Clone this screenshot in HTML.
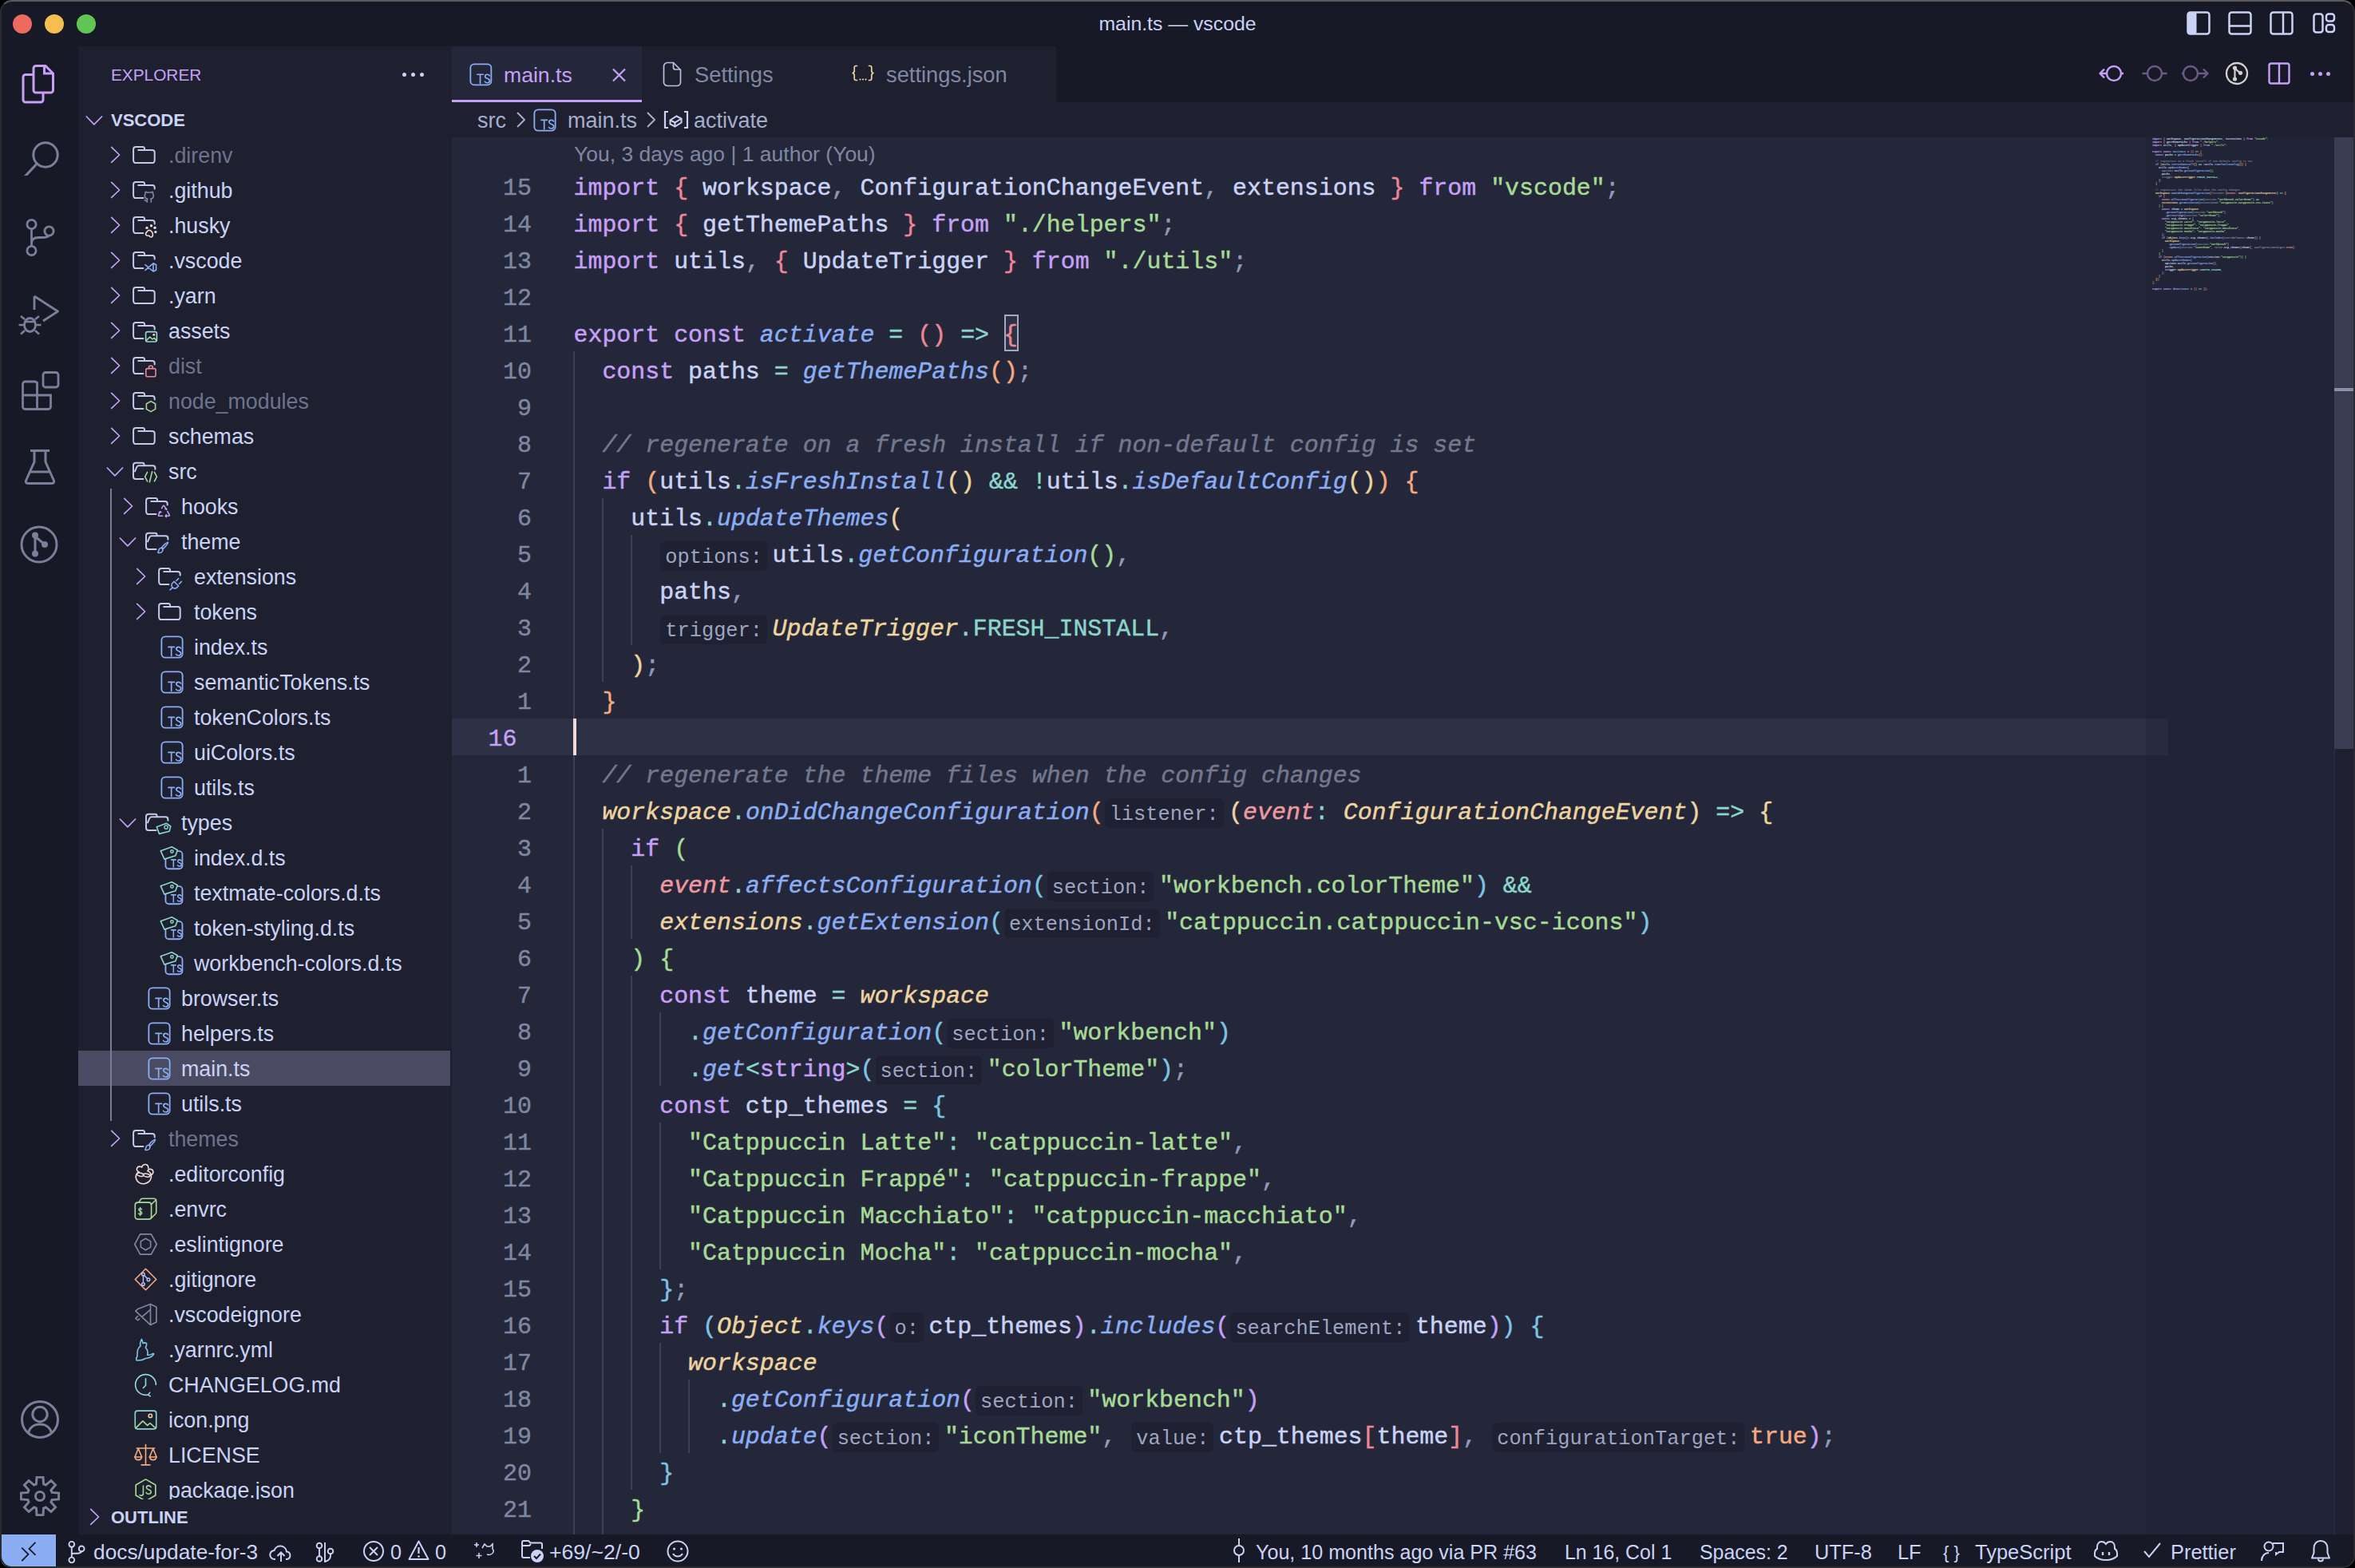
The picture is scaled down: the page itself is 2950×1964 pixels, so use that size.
<!DOCTYPE html><html><head><meta charset="utf-8"><title>main.ts — vscode</title><style>
html,body{margin:0;padding:0;background:#000;}
body{width:2950px;height:1964px;overflow:hidden;position:relative;}
#app{position:absolute;left:0;top:0;width:2950px;height:1964px;border-radius:15px;overflow:hidden;background:#181926;}
#frame{position:absolute;left:0;top:0;width:2946px;height:1960px;border:2px solid #2b2b2d;border-top-color:#5c5c5e;border-radius:15px;z-index:50;}
#app div, #app svg{position:absolute;}
.code{font-family:"Liberation Mono";font-size:29.92px;line-height:46px;height:46px;white-space:pre;color:#cad3f5;-webkit-text-stroke:0.45px currentColor;}
.hint{-webkit-text-stroke:0;display:inline-block;font-family:'Liberation Mono';font-size:25.37px;line-height:37px;height:37px;vertical-align:top;margin-top:4.5px;background:#1f2132;color:#9ea5c3;border-radius:6px;padding:0 5.9px;margin-left:1.2px;margin-right:6.6px;}
.hint span{position:relative;top:2px;}
</style></head><body><div id="app">

<div style="position:absolute;left:0px;top:0px;width:2950px;height:58px;background:#181926;"></div>
<div style="position:absolute;left:0px;top:58px;width:98px;height:1864px;background:#181926;"></div>
<div style="position:absolute;left:98px;top:58px;width:468px;height:1864px;background:#1e2030;"></div>
<div style="position:absolute;left:566px;top:58px;width:2384px;height:70px;background:#181926;"></div>
<div style="position:absolute;left:566px;top:128px;width:2384px;height:44px;background:#1e2030;"></div>
<div style="position:absolute;left:566px;top:172px;width:2384px;height:1750px;background:#24273a;"></div>
<div style="position:absolute;left:0px;top:1922px;width:2950px;height:42px;background:#181926;"></div>
<div style="left:16px;top:18px;width:24px;height:24px;border-radius:50%;background:#ed6a5e"></div>
<div style="left:56px;top:18px;width:24px;height:24px;border-radius:50%;background:#f4bf4f"></div>
<div style="left:96px;top:18px;width:24px;height:24px;border-radius:50%;background:#61c554"></div>
<div style="position:absolute;left:1475px;top:10px;height:40px;line-height:40px;font-family:'Liberation Sans';font-size:24.8px;font-weight:normal;color:#cad3f5;white-space:pre;transform:translateX(-50%);">main.ts — vscode</div>
<div style="position:absolute;left:566px;top:58px;width:238px;height:70px;background:#24273a;"></div>
<div style="position:absolute;left:566px;top:125px;width:238px;height:3px;background:#c6a0f6;"></div>
<div style="position:absolute;left:804px;top:58px;width:242px;height:70px;background:#1e2030;"></div>
<div style="position:absolute;left:1046px;top:58px;width:277px;height:70px;background:#1e2030;"></div>
<div style="position:absolute;left:631px;top:72px;height:44px;line-height:44px;font-family:'Liberation Sans';font-size:26.6px;font-weight:normal;color:#c6a0f6;white-space:pre;">main.ts</div>
<div style="position:absolute;left:870px;top:72px;height:44px;line-height:44px;font-family:'Liberation Sans';font-size:27.3px;font-weight:normal;color:#8087a2;white-space:pre;">Settings</div>
<div style="position:absolute;left:1110px;top:72px;height:44px;line-height:44px;font-family:'Liberation Sans';font-size:27.3px;font-weight:normal;color:#8087a2;white-space:pre;">settings.json</div>
<div style="position:absolute;left:598px;top:129px;height:44px;line-height:44px;font-family:'Liberation Sans';font-size:27px;font-weight:normal;color:#a5adcb;white-space:pre;">src</div>
<div style="position:absolute;left:711px;top:129px;height:44px;line-height:44px;font-family:'Liberation Sans';font-size:27px;font-weight:normal;color:#a5adcb;white-space:pre;">main.ts</div>
<div style="position:absolute;left:869px;top:129px;height:44px;line-height:44px;font-family:'Liberation Sans';font-size:27px;font-weight:normal;color:#a5adcb;white-space:pre;">activate</div>
<div style="position:absolute;left:719px;top:173px;height:40px;line-height:40px;font-family:'Liberation Sans';font-size:26.5px;font-weight:normal;color:#8087a2;white-space:pre;">You, 3 days ago | 1 author (You)</div>
<div style="position:absolute;left:139px;top:76px;height:36px;line-height:36px;font-family:'Liberation Sans';font-size:20.8px;font-weight:normal;color:#c6a0f6;white-space:pre;">EXPLORER</div>
<div style="position:absolute;left:139px;top:133px;height:36px;line-height:36px;font-family:'Liberation Sans';font-size:22px;font-weight:bold;color:#cad3f5;white-space:pre;">VSCODE</div>
<div style="position:absolute;left:98px;top:1316px;width:466px;height:44px;background:#4a4b62;"></div>
<div style="position:absolute;left:138px;top:612px;width:2px;height:792px;background:#777c97;"></div>
<svg style="position:absolute;left:138px;top:182px;" width="16" height="24" viewBox="0 0 16 24" fill="none"><path d="M1.7 2.3 L11.6 12 L1.7 21.4" stroke="#c6a0f6" stroke-width="1.7" fill="none" stroke-linecap="round" stroke-linejoin="round"/></svg>
<svg style="position:absolute;left:164px;top:178px;" width="36" height="36" viewBox="0 0 36 36" fill="none"><path d="M6.1 26.1a3 3 0 0 1-3-3V8.9a3 3 0 0 1 3-3h8.7a2.2 2.2 0 0 1 2.2 2.2V10" stroke="#c3c9ea" stroke-width="2" stroke-linecap="round" stroke-linejoin="round"/><path d="M9.2 10h17.5a3 3 0 0 1 3 3v10.1a3 3 0 0 1-3 3H6.1" stroke="#c3c9ea" stroke-width="2" stroke-linecap="round" stroke-linejoin="round"/></svg>
<div style="position:absolute;left:211px;top:173px;height:44px;line-height:44px;font-family:'Liberation Sans';font-size:26.8px;font-weight:normal;color:#6e738d;white-space:pre;">.direnv</div>
<svg style="position:absolute;left:138px;top:226px;" width="16" height="24" viewBox="0 0 16 24" fill="none"><path d="M1.7 2.3 L11.6 12 L1.7 21.4" stroke="#c6a0f6" stroke-width="1.7" fill="none" stroke-linecap="round" stroke-linejoin="round"/></svg>
<svg style="position:absolute;left:164px;top:222px;" width="36" height="36" viewBox="0 0 36 36" fill="none"><path d="M15.4 26.1H6.1a3 3 0 0 1-3-3V8.9a3 3 0 0 1 3-3h8.7a2.2 2.2 0 0 1 2.2 2.2V10" stroke="#c3c9ea" stroke-width="2" stroke-linecap="round" stroke-linejoin="round"/><path d="M9.2 10h17.5a3 3 0 0 1 3 3v1.4" stroke="#c3c9ea" stroke-width="2" stroke-linecap="round" stroke-linejoin="round"/><path d="M20.3 31.3v-2.7c0-.7.3-1.2.6-1.5-2.3-.3-3.6-1.4-3.6-4.2 0-.9.3-1.7.9-2.3-.2-.6-.2-1.6.1-2.3 0 0 .9-.1 2.4 1a8 8 0 0 1 4.2 0c1.5-1.1 2.4-1 2.4-1 .3.7.3 1.7.1 2.3.6.6.9 1.4.9 2.3 0 2.8-1.3 3.9-3.6 4.2.4.3.6.8.6 1.5v2.7M20.3 29.7c-1.8.5-2.4-.6-3-1.4" stroke="#8087a2" stroke-width="1.6" stroke-linecap="round" stroke-linejoin="round"/></svg>
<div style="position:absolute;left:211px;top:217px;height:44px;line-height:44px;font-family:'Liberation Sans';font-size:26.8px;font-weight:normal;color:#cad3f5;white-space:pre;">.github</div>
<svg style="position:absolute;left:138px;top:270px;" width="16" height="24" viewBox="0 0 16 24" fill="none"><path d="M1.7 2.3 L11.6 12 L1.7 21.4" stroke="#c6a0f6" stroke-width="1.7" fill="none" stroke-linecap="round" stroke-linejoin="round"/></svg>
<svg style="position:absolute;left:164px;top:266px;" width="36" height="36" viewBox="0 0 36 36" fill="none"><path d="M15.4 26.1H6.1a3 3 0 0 1-3-3V8.9a3 3 0 0 1 3-3h8.7a2.2 2.2 0 0 1 2.2 2.2V10" stroke="#c3c9ea" stroke-width="2" stroke-linecap="round" stroke-linejoin="round"/><path d="M9.2 10h17.5a3 3 0 0 1 3 3v1.4" stroke="#c3c9ea" stroke-width="2" stroke-linecap="round" stroke-linejoin="round"/><path d="M18.6 27.6c0-2.4 2.7-5.2 4.4-5.2 1.9 0 4.4 2.6 4.4 5 0 2-1 3.6-2.2 3.6-1.4 0-1.4-1.3-2.4-1.6-1.2-.3-4.2.4-4.2-1.8z" stroke="#f4dbd6" stroke-width="1.6" stroke-linecap="round" stroke-linejoin="round"/><circle cx="20" cy="19.4" r="1.7" fill="#f4dbd6"/><circle cx="25.5" cy="16.8" r="1.7" fill="#f4dbd6"/><circle cx="30" cy="19.2" r="1.7" fill="#f4dbd6"/><circle cx="30.8" cy="24.6" r="1.7" fill="#f4dbd6"/></svg>
<div style="position:absolute;left:211px;top:261px;height:44px;line-height:44px;font-family:'Liberation Sans';font-size:26.8px;font-weight:normal;color:#cad3f5;white-space:pre;">.husky</div>
<svg style="position:absolute;left:138px;top:314px;" width="16" height="24" viewBox="0 0 16 24" fill="none"><path d="M1.7 2.3 L11.6 12 L1.7 21.4" stroke="#c6a0f6" stroke-width="1.7" fill="none" stroke-linecap="round" stroke-linejoin="round"/></svg>
<svg style="position:absolute;left:164px;top:310px;" width="36" height="36" viewBox="0 0 36 36" fill="none"><path d="M15.4 26.1H6.1a3 3 0 0 1-3-3V8.9a3 3 0 0 1 3-3h8.7a2.2 2.2 0 0 1 2.2 2.2V10" stroke="#c3c9ea" stroke-width="2" stroke-linecap="round" stroke-linejoin="round"/><path d="M9.2 10h17.5a3 3 0 0 1 3 3v1.4" stroke="#c3c9ea" stroke-width="2" stroke-linecap="round" stroke-linejoin="round"/><path d="M18 28.4l10-8.6 3.6 1.7v6.7L28 30l-10-8.4M28 19.8V30" stroke="#8aadf4" stroke-width="1.6" stroke-linecap="round" stroke-linejoin="round"/></svg>
<div style="position:absolute;left:211px;top:305px;height:44px;line-height:44px;font-family:'Liberation Sans';font-size:26.8px;font-weight:normal;color:#cad3f5;white-space:pre;">.vscode</div>
<svg style="position:absolute;left:138px;top:358px;" width="16" height="24" viewBox="0 0 16 24" fill="none"><path d="M1.7 2.3 L11.6 12 L1.7 21.4" stroke="#c6a0f6" stroke-width="1.7" fill="none" stroke-linecap="round" stroke-linejoin="round"/></svg>
<svg style="position:absolute;left:164px;top:354px;" width="36" height="36" viewBox="0 0 36 36" fill="none"><path d="M6.1 26.1a3 3 0 0 1-3-3V8.9a3 3 0 0 1 3-3h8.7a2.2 2.2 0 0 1 2.2 2.2V10" stroke="#c3c9ea" stroke-width="2" stroke-linecap="round" stroke-linejoin="round"/><path d="M9.2 10h17.5a3 3 0 0 1 3 3v10.1a3 3 0 0 1-3 3H6.1" stroke="#c3c9ea" stroke-width="2" stroke-linecap="round" stroke-linejoin="round"/></svg>
<div style="position:absolute;left:211px;top:349px;height:44px;line-height:44px;font-family:'Liberation Sans';font-size:26.8px;font-weight:normal;color:#cad3f5;white-space:pre;">.yarn</div>
<svg style="position:absolute;left:138px;top:402px;" width="16" height="24" viewBox="0 0 16 24" fill="none"><path d="M1.7 2.3 L11.6 12 L1.7 21.4" stroke="#c6a0f6" stroke-width="1.7" fill="none" stroke-linecap="round" stroke-linejoin="round"/></svg>
<svg style="position:absolute;left:164px;top:398px;" width="36" height="36" viewBox="0 0 36 36" fill="none"><path d="M15.4 26.1H6.1a3 3 0 0 1-3-3V8.9a3 3 0 0 1 3-3h8.7a2.2 2.2 0 0 1 2.2 2.2V10" stroke="#c3c9ea" stroke-width="2" stroke-linecap="round" stroke-linejoin="round"/><path d="M9.2 10h17.5a3 3 0 0 1 3 3v1.4" stroke="#c3c9ea" stroke-width="2" stroke-linecap="round" stroke-linejoin="round"/><rect x="18.6" y="17.6" width="13.8" height="12.4" rx="2" stroke="#91d7e3" stroke-width="1.6" stroke-linecap="round" stroke-linejoin="round"/><path d="M19.2 28.6l4.6-4.6 3.2 3 2-1.6 3 3" stroke="#a6da95" stroke-width="1.6" stroke-linecap="round" stroke-linejoin="round"/><circle cx="28.8" cy="21.2" r="1.5" fill="#eed49f"/></svg>
<div style="position:absolute;left:211px;top:393px;height:44px;line-height:44px;font-family:'Liberation Sans';font-size:26.8px;font-weight:normal;color:#cad3f5;white-space:pre;">assets</div>
<svg style="position:absolute;left:138px;top:446px;" width="16" height="24" viewBox="0 0 16 24" fill="none"><path d="M1.7 2.3 L11.6 12 L1.7 21.4" stroke="#c6a0f6" stroke-width="1.7" fill="none" stroke-linecap="round" stroke-linejoin="round"/></svg>
<svg style="position:absolute;left:164px;top:442px;" width="36" height="36" viewBox="0 0 36 36" fill="none"><path d="M15.4 26.1H6.1a3 3 0 0 1-3-3V8.9a3 3 0 0 1 3-3h8.7a2.2 2.2 0 0 1 2.2 2.2V10" stroke="#c3c9ea" stroke-width="2" stroke-linecap="round" stroke-linejoin="round"/><path d="M9.2 10h17.5a3 3 0 0 1 3 3v1.4" stroke="#c3c9ea" stroke-width="2" stroke-linecap="round" stroke-linejoin="round"/><rect x="18.8" y="19.6" width="12.2" height="10.2" rx="2" stroke="#ed8796" stroke-width="1.6" stroke-linecap="round" stroke-linejoin="round"/><path d="M22.6 19.6v-2.2a1.2 1.2 0 0 1 1.2-1.2h2.2a1.2 1.2 0 0 1 1.2 1.2v2.2" stroke="#ed8796" stroke-width="1.6" stroke-linecap="round" stroke-linejoin="round"/></svg>
<div style="position:absolute;left:211px;top:437px;height:44px;line-height:44px;font-family:'Liberation Sans';font-size:26.8px;font-weight:normal;color:#6e738d;white-space:pre;">dist</div>
<svg style="position:absolute;left:138px;top:490px;" width="16" height="24" viewBox="0 0 16 24" fill="none"><path d="M1.7 2.3 L11.6 12 L1.7 21.4" stroke="#c6a0f6" stroke-width="1.7" fill="none" stroke-linecap="round" stroke-linejoin="round"/></svg>
<svg style="position:absolute;left:164px;top:486px;" width="36" height="36" viewBox="0 0 36 36" fill="none"><path d="M15.4 26.1H6.1a3 3 0 0 1-3-3V8.9a3 3 0 0 1 3-3h8.7a2.2 2.2 0 0 1 2.2 2.2V10" stroke="#c3c9ea" stroke-width="2" stroke-linecap="round" stroke-linejoin="round"/><path d="M9.2 10h17.5a3 3 0 0 1 3 3v1.4" stroke="#c3c9ea" stroke-width="2" stroke-linecap="round" stroke-linejoin="round"/><path d="M25 16.6l5.6 3.2v6.6L25 29.6l-5.6-3.2v-6.6z" stroke="#a6da95" stroke-width="1.6" stroke-linecap="round" stroke-linejoin="round"/></svg>
<div style="position:absolute;left:211px;top:481px;height:44px;line-height:44px;font-family:'Liberation Sans';font-size:26.8px;font-weight:normal;color:#6e738d;white-space:pre;">node_modules</div>
<svg style="position:absolute;left:138px;top:534px;" width="16" height="24" viewBox="0 0 16 24" fill="none"><path d="M1.7 2.3 L11.6 12 L1.7 21.4" stroke="#c6a0f6" stroke-width="1.7" fill="none" stroke-linecap="round" stroke-linejoin="round"/></svg>
<svg style="position:absolute;left:164px;top:530px;" width="36" height="36" viewBox="0 0 36 36" fill="none"><path d="M6.1 26.1a3 3 0 0 1-3-3V8.9a3 3 0 0 1 3-3h8.7a2.2 2.2 0 0 1 2.2 2.2V10" stroke="#c3c9ea" stroke-width="2" stroke-linecap="round" stroke-linejoin="round"/><path d="M9.2 10h17.5a3 3 0 0 1 3 3v10.1a3 3 0 0 1-3 3H6.1" stroke="#c3c9ea" stroke-width="2" stroke-linecap="round" stroke-linejoin="round"/></svg>
<div style="position:absolute;left:211px;top:525px;height:44px;line-height:44px;font-family:'Liberation Sans';font-size:26.8px;font-weight:normal;color:#cad3f5;white-space:pre;">schemas</div>
<svg style="position:absolute;left:133px;top:584px;" width="24" height="14" viewBox="0 0 24 14" fill="none"><path d="M1.3 2 L10.9 11.8 L20.6 2" stroke="#c6a0f6" stroke-width="1.7" fill="none" stroke-linecap="round" stroke-linejoin="round"/></svg>
<svg style="position:absolute;left:164px;top:574px;" width="36" height="36" viewBox="0 0 36 36" fill="none"><path d="M15.5 26H6a3 3 0 0 1-3-3V8.7a3 3 0 0 1 3-3h8.5a2 2 0 0 1 2 2v1.6" stroke="#c3c9ea" stroke-width="2" stroke-linecap="round" stroke-linejoin="round"/><path d="M5 16.3l2.2-5.1a3 3 0 0 1 2.6-1.9h17.6a3 3 0 0 1 3 3v1.4" stroke="#c3c9ea" stroke-width="2" stroke-linecap="round" stroke-linejoin="round"/><path d="M20.6 17.4l-3 5.8 3 5.6M29.4 17.4l3 5.8-3 5.6M26.6 16.8l-3.2 13" stroke="#a6da95" stroke-width="1.6" stroke-linecap="round" stroke-linejoin="round"/></svg>
<div style="position:absolute;left:211px;top:569px;height:44px;line-height:44px;font-family:'Liberation Sans';font-size:26.8px;font-weight:normal;color:#cad3f5;white-space:pre;">src</div>
<svg style="position:absolute;left:154px;top:622px;" width="16" height="24" viewBox="0 0 16 24" fill="none"><path d="M1.7 2.3 L11.6 12 L1.7 21.4" stroke="#c6a0f6" stroke-width="1.7" fill="none" stroke-linecap="round" stroke-linejoin="round"/></svg>
<svg style="position:absolute;left:180px;top:618px;" width="36" height="36" viewBox="0 0 36 36" fill="none"><path d="M15.4 26.1H6.1a3 3 0 0 1-3-3V8.9a3 3 0 0 1 3-3h8.7a2.2 2.2 0 0 1 2.2 2.2V10" stroke="#c3c9ea" stroke-width="2" stroke-linecap="round" stroke-linejoin="round"/><path d="M9.2 10h17.5a3 3 0 0 1 3 3v1.4" stroke="#c3c9ea" stroke-width="2" stroke-linecap="round" stroke-linejoin="round"/><path d="M22.6 18.6l1.6-2.8a1 1 0 0 1 1.7 0l2.1 3.6M27 19.4l1.4-.4.3 1.5" stroke="#c6a0f6" stroke-width="1.6" stroke-linecap="round" stroke-linejoin="round"/><path d="M29.8 22.6l2.4 4.2a1 1 0 0 1-.9 1.5h-4.1M28.4 26.8l-1.2 1.5 1.2 1.4" stroke="#c6a0f6" stroke-width="1.6" stroke-linecap="round" stroke-linejoin="round"/><path d="M23.6 28.3h-4.2a1 1 0 0 1-.9-1.5l2.1-3.6M19.2 23.9l1.4-1.1 1.3.8" stroke="#c6a0f6" stroke-width="1.6" stroke-linecap="round" stroke-linejoin="round"/></svg>
<div style="position:absolute;left:227px;top:613px;height:44px;line-height:44px;font-family:'Liberation Sans';font-size:26.8px;font-weight:normal;color:#cad3f5;white-space:pre;">hooks</div>
<svg style="position:absolute;left:149px;top:672px;" width="24" height="14" viewBox="0 0 24 14" fill="none"><path d="M1.3 2 L10.9 11.8 L20.6 2" stroke="#c6a0f6" stroke-width="1.7" fill="none" stroke-linecap="round" stroke-linejoin="round"/></svg>
<svg style="position:absolute;left:180px;top:662px;" width="36" height="36" viewBox="0 0 36 36" fill="none"><path d="M15.5 26H6a3 3 0 0 1-3-3V8.7a3 3 0 0 1 3-3h8.5a2 2 0 0 1 2 2v1.6" stroke="#c3c9ea" stroke-width="2" stroke-linecap="round" stroke-linejoin="round"/><path d="M5 16.3l2.2-5.1a3 3 0 0 1 2.6-1.9h17.6a3 3 0 0 1 3 3v1.4" stroke="#c3c9ea" stroke-width="2" stroke-linecap="round" stroke-linejoin="round"/><path d="M30.4 17.2c-1.4-.3-6.6 4.6-7.6 6.4l1.6 1.6c1.8-1 6.4-6.6 6-8z" stroke="#8aadf4" stroke-width="1.6" stroke-linecap="round" stroke-linejoin="round"/><path d="M22.4 24.2c-1.6 0-2.8 1-3.4 2.6-.5 1.3-.6 2.5-1.2 3.4 2.4.6 4.6-.2 5.6-1.6.8-1.2.6-3-1-4.4z" stroke="#8aadf4" stroke-width="1.6" stroke-linecap="round" stroke-linejoin="round"/></svg>
<div style="position:absolute;left:227px;top:657px;height:44px;line-height:44px;font-family:'Liberation Sans';font-size:26.8px;font-weight:normal;color:#cad3f5;white-space:pre;">theme</div>
<svg style="position:absolute;left:170px;top:710px;" width="16" height="24" viewBox="0 0 16 24" fill="none"><path d="M1.7 2.3 L11.6 12 L1.7 21.4" stroke="#c6a0f6" stroke-width="1.7" fill="none" stroke-linecap="round" stroke-linejoin="round"/></svg>
<svg style="position:absolute;left:196px;top:706px;" width="36" height="36" viewBox="0 0 36 36" fill="none"><path d="M15.4 26.1H6.1a3 3 0 0 1-3-3V8.9a3 3 0 0 1 3-3h8.7a2.2 2.2 0 0 1 2.2 2.2V10" stroke="#c3c9ea" stroke-width="2" stroke-linecap="round" stroke-linejoin="round"/><path d="M9.2 10h17.5a3 3 0 0 1 3 3v1.4" stroke="#c3c9ea" stroke-width="2" stroke-linecap="round" stroke-linejoin="round"/><path d="M22 22.4l5.6 5.6-1.9 1.9a3.9 3.9 0 0 1-5.6 0 3.9 3.9 0 0 1 0-5.6zM27.6 18.6l-2.9 2.9M31.4 22.4l-2.9 2.9M20.2 29.8l-3.2 3" stroke="#8aadf4" stroke-width="1.6" stroke-linecap="round" stroke-linejoin="round"/></svg>
<div style="position:absolute;left:243px;top:701px;height:44px;line-height:44px;font-family:'Liberation Sans';font-size:26.8px;font-weight:normal;color:#cad3f5;white-space:pre;">extensions</div>
<svg style="position:absolute;left:170px;top:754px;" width="16" height="24" viewBox="0 0 16 24" fill="none"><path d="M1.7 2.3 L11.6 12 L1.7 21.4" stroke="#c6a0f6" stroke-width="1.7" fill="none" stroke-linecap="round" stroke-linejoin="round"/></svg>
<svg style="position:absolute;left:196px;top:750px;" width="36" height="36" viewBox="0 0 36 36" fill="none"><path d="M6.1 26.1a3 3 0 0 1-3-3V8.9a3 3 0 0 1 3-3h8.7a2.2 2.2 0 0 1 2.2 2.2V10" stroke="#c3c9ea" stroke-width="2" stroke-linecap="round" stroke-linejoin="round"/><path d="M9.2 10h17.5a3 3 0 0 1 3 3v10.1a3 3 0 0 1-3 3H6.1" stroke="#c3c9ea" stroke-width="2" stroke-linecap="round" stroke-linejoin="round"/></svg>
<div style="position:absolute;left:243px;top:745px;height:44px;line-height:44px;font-family:'Liberation Sans';font-size:26.8px;font-weight:normal;color:#cad3f5;white-space:pre;">tokens</div>
<svg style="position:absolute;left:200.5px;top:795.8px;overflow:visible;" width="29" height="29" viewBox="0 0 16 16" fill="none"><rect x=".75" y=".75" width="14.5" height="14.5" rx="2.6" stroke="#8aadf4" stroke-width="1"/><path transform="translate(0 0) scale(1.0)" d="M5.5 7.95h4.1M7.55 7.95v6.15M14.05 8.8c-.35-.55-.9-.85-1.55-.85-.9 0-1.55.55-1.55 1.35 0 1.75 3.2 1.15 3.2 3.05 0 .8-.7 1.45-1.7 1.45-.75 0-1.35-.35-1.7-.9" stroke="#8aadf4" stroke-width=".95" fill="none" stroke-linecap="round" stroke-linejoin="round"/></svg>
<div style="position:absolute;left:243px;top:789px;height:44px;line-height:44px;font-family:'Liberation Sans';font-size:26.8px;font-weight:normal;color:#cad3f5;white-space:pre;">index.ts</div>
<svg style="position:absolute;left:200.5px;top:839.8px;overflow:visible;" width="29" height="29" viewBox="0 0 16 16" fill="none"><rect x=".75" y=".75" width="14.5" height="14.5" rx="2.6" stroke="#8aadf4" stroke-width="1"/><path transform="translate(0 0) scale(1.0)" d="M5.5 7.95h4.1M7.55 7.95v6.15M14.05 8.8c-.35-.55-.9-.85-1.55-.85-.9 0-1.55.55-1.55 1.35 0 1.75 3.2 1.15 3.2 3.05 0 .8-.7 1.45-1.7 1.45-.75 0-1.35-.35-1.7-.9" stroke="#8aadf4" stroke-width=".95" fill="none" stroke-linecap="round" stroke-linejoin="round"/></svg>
<div style="position:absolute;left:243px;top:833px;height:44px;line-height:44px;font-family:'Liberation Sans';font-size:26.8px;font-weight:normal;color:#cad3f5;white-space:pre;">semanticTokens.ts</div>
<svg style="position:absolute;left:200.5px;top:883.8px;overflow:visible;" width="29" height="29" viewBox="0 0 16 16" fill="none"><rect x=".75" y=".75" width="14.5" height="14.5" rx="2.6" stroke="#8aadf4" stroke-width="1"/><path transform="translate(0 0) scale(1.0)" d="M5.5 7.95h4.1M7.55 7.95v6.15M14.05 8.8c-.35-.55-.9-.85-1.55-.85-.9 0-1.55.55-1.55 1.35 0 1.75 3.2 1.15 3.2 3.05 0 .8-.7 1.45-1.7 1.45-.75 0-1.35-.35-1.7-.9" stroke="#8aadf4" stroke-width=".95" fill="none" stroke-linecap="round" stroke-linejoin="round"/></svg>
<div style="position:absolute;left:243px;top:877px;height:44px;line-height:44px;font-family:'Liberation Sans';font-size:26.8px;font-weight:normal;color:#cad3f5;white-space:pre;">tokenColors.ts</div>
<svg style="position:absolute;left:200.5px;top:927.8px;overflow:visible;" width="29" height="29" viewBox="0 0 16 16" fill="none"><rect x=".75" y=".75" width="14.5" height="14.5" rx="2.6" stroke="#8aadf4" stroke-width="1"/><path transform="translate(0 0) scale(1.0)" d="M5.5 7.95h4.1M7.55 7.95v6.15M14.05 8.8c-.35-.55-.9-.85-1.55-.85-.9 0-1.55.55-1.55 1.35 0 1.75 3.2 1.15 3.2 3.05 0 .8-.7 1.45-1.7 1.45-.75 0-1.35-.35-1.7-.9" stroke="#8aadf4" stroke-width=".95" fill="none" stroke-linecap="round" stroke-linejoin="round"/></svg>
<div style="position:absolute;left:243px;top:921px;height:44px;line-height:44px;font-family:'Liberation Sans';font-size:26.8px;font-weight:normal;color:#cad3f5;white-space:pre;">uiColors.ts</div>
<svg style="position:absolute;left:200.5px;top:971.8px;overflow:visible;" width="29" height="29" viewBox="0 0 16 16" fill="none"><rect x=".75" y=".75" width="14.5" height="14.5" rx="2.6" stroke="#8aadf4" stroke-width="1"/><path transform="translate(0 0) scale(1.0)" d="M5.5 7.95h4.1M7.55 7.95v6.15M14.05 8.8c-.35-.55-.9-.85-1.55-.85-.9 0-1.55.55-1.55 1.35 0 1.75 3.2 1.15 3.2 3.05 0 .8-.7 1.45-1.7 1.45-.75 0-1.35-.35-1.7-.9" stroke="#8aadf4" stroke-width=".95" fill="none" stroke-linecap="round" stroke-linejoin="round"/></svg>
<div style="position:absolute;left:243px;top:965px;height:44px;line-height:44px;font-family:'Liberation Sans';font-size:26.8px;font-weight:normal;color:#cad3f5;white-space:pre;">utils.ts</div>
<svg style="position:absolute;left:149px;top:1024px;" width="24" height="14" viewBox="0 0 24 14" fill="none"><path d="M1.3 2 L10.9 11.8 L20.6 2" stroke="#c6a0f6" stroke-width="1.7" fill="none" stroke-linecap="round" stroke-linejoin="round"/></svg>
<svg style="position:absolute;left:180px;top:1014px;" width="36" height="36" viewBox="0 0 36 36" fill="none"><path d="M15.5 26H6a3 3 0 0 1-3-3V8.7a3 3 0 0 1 3-3h8.5a2 2 0 0 1 2 2v1.6" stroke="#c3c9ea" stroke-width="2" stroke-linecap="round" stroke-linejoin="round"/><path d="M5 16.3l2.2-5.1a3 3 0 0 1 2.6-1.9h17.6a3 3 0 0 1 3 3v1.4" stroke="#c3c9ea" stroke-width="2" stroke-linecap="round" stroke-linejoin="round"/><path d="M16.3 21.8l12.1-4.6 5.4 3.8-1.7 6.3-12.6 3.1z" stroke="#8bd5ca" stroke-width="1.6" stroke-linecap="round" stroke-linejoin="round"/><circle cx="28.1" cy="22.1" r="2.2" stroke="#8bd5ca" stroke-width="1.4"/></svg>
<div style="position:absolute;left:227px;top:1009px;height:44px;line-height:44px;font-family:'Liberation Sans';font-size:26.8px;font-weight:normal;color:#cad3f5;white-space:pre;">types</div>
<svg style="position:absolute;left:199.5px;top:1059.5px;overflow:visible;" width="29" height="29" viewBox="0 0 16 16" fill="none"><rect x="4.1" y="3.4" width="11.6" height="12.2" rx="2.2" stroke="#8aadf4" stroke-width="1"/><path d="M8 9.3h3.1M9.55 9.3v5.1M14.9 10c-.25-.45-.65-.7-1.15-.7-.7 0-1.2.45-1.2 1.05 0 1.35 2.45.9 2.45 2.35 0 .65-.55 1.15-1.3 1.15-.55 0-1-.25-1.3-.65" stroke="#8aadf4" stroke-width=".85" fill="none" stroke-linecap="round" stroke-linejoin="round"/><path d="M.7 3.2L8.4.4l3.9 2.2L11 6.5 3.3 8.9z" fill="#1e2030" stroke="#8bd5ca" stroke-width=".9" stroke-linecap="round" stroke-linejoin="round"/><circle cx="8.5" cy="3.6" r=".95" stroke="#8bd5ca" stroke-width=".8"/></svg>
<div style="position:absolute;left:243px;top:1053px;height:44px;line-height:44px;font-family:'Liberation Sans';font-size:26.8px;font-weight:normal;color:#cad3f5;white-space:pre;">index.d.ts</div>
<svg style="position:absolute;left:199.5px;top:1103.5px;overflow:visible;" width="29" height="29" viewBox="0 0 16 16" fill="none"><rect x="4.1" y="3.4" width="11.6" height="12.2" rx="2.2" stroke="#8aadf4" stroke-width="1"/><path d="M8 9.3h3.1M9.55 9.3v5.1M14.9 10c-.25-.45-.65-.7-1.15-.7-.7 0-1.2.45-1.2 1.05 0 1.35 2.45.9 2.45 2.35 0 .65-.55 1.15-1.3 1.15-.55 0-1-.25-1.3-.65" stroke="#8aadf4" stroke-width=".85" fill="none" stroke-linecap="round" stroke-linejoin="round"/><path d="M.7 3.2L8.4.4l3.9 2.2L11 6.5 3.3 8.9z" fill="#1e2030" stroke="#8bd5ca" stroke-width=".9" stroke-linecap="round" stroke-linejoin="round"/><circle cx="8.5" cy="3.6" r=".95" stroke="#8bd5ca" stroke-width=".8"/></svg>
<div style="position:absolute;left:243px;top:1097px;height:44px;line-height:44px;font-family:'Liberation Sans';font-size:26.8px;font-weight:normal;color:#cad3f5;white-space:pre;">textmate-colors.d.ts</div>
<svg style="position:absolute;left:199.5px;top:1147.5px;overflow:visible;" width="29" height="29" viewBox="0 0 16 16" fill="none"><rect x="4.1" y="3.4" width="11.6" height="12.2" rx="2.2" stroke="#8aadf4" stroke-width="1"/><path d="M8 9.3h3.1M9.55 9.3v5.1M14.9 10c-.25-.45-.65-.7-1.15-.7-.7 0-1.2.45-1.2 1.05 0 1.35 2.45.9 2.45 2.35 0 .65-.55 1.15-1.3 1.15-.55 0-1-.25-1.3-.65" stroke="#8aadf4" stroke-width=".85" fill="none" stroke-linecap="round" stroke-linejoin="round"/><path d="M.7 3.2L8.4.4l3.9 2.2L11 6.5 3.3 8.9z" fill="#1e2030" stroke="#8bd5ca" stroke-width=".9" stroke-linecap="round" stroke-linejoin="round"/><circle cx="8.5" cy="3.6" r=".95" stroke="#8bd5ca" stroke-width=".8"/></svg>
<div style="position:absolute;left:243px;top:1141px;height:44px;line-height:44px;font-family:'Liberation Sans';font-size:26.8px;font-weight:normal;color:#cad3f5;white-space:pre;">token-styling.d.ts</div>
<svg style="position:absolute;left:199.5px;top:1191.5px;overflow:visible;" width="29" height="29" viewBox="0 0 16 16" fill="none"><rect x="4.1" y="3.4" width="11.6" height="12.2" rx="2.2" stroke="#8aadf4" stroke-width="1"/><path d="M8 9.3h3.1M9.55 9.3v5.1M14.9 10c-.25-.45-.65-.7-1.15-.7-.7 0-1.2.45-1.2 1.05 0 1.35 2.45.9 2.45 2.35 0 .65-.55 1.15-1.3 1.15-.55 0-1-.25-1.3-.65" stroke="#8aadf4" stroke-width=".85" fill="none" stroke-linecap="round" stroke-linejoin="round"/><path d="M.7 3.2L8.4.4l3.9 2.2L11 6.5 3.3 8.9z" fill="#1e2030" stroke="#8bd5ca" stroke-width=".9" stroke-linecap="round" stroke-linejoin="round"/><circle cx="8.5" cy="3.6" r=".95" stroke="#8bd5ca" stroke-width=".8"/></svg>
<div style="position:absolute;left:243px;top:1185px;height:44px;line-height:44px;font-family:'Liberation Sans';font-size:26.8px;font-weight:normal;color:#cad3f5;white-space:pre;">workbench-colors.d.ts</div>
<svg style="position:absolute;left:184.5px;top:1235.8px;overflow:visible;" width="29" height="29" viewBox="0 0 16 16" fill="none"><rect x=".75" y=".75" width="14.5" height="14.5" rx="2.6" stroke="#8aadf4" stroke-width="1"/><path transform="translate(0 0) scale(1.0)" d="M5.5 7.95h4.1M7.55 7.95v6.15M14.05 8.8c-.35-.55-.9-.85-1.55-.85-.9 0-1.55.55-1.55 1.35 0 1.75 3.2 1.15 3.2 3.05 0 .8-.7 1.45-1.7 1.45-.75 0-1.35-.35-1.7-.9" stroke="#8aadf4" stroke-width=".95" fill="none" stroke-linecap="round" stroke-linejoin="round"/></svg>
<div style="position:absolute;left:227px;top:1229px;height:44px;line-height:44px;font-family:'Liberation Sans';font-size:26.8px;font-weight:normal;color:#cad3f5;white-space:pre;">browser.ts</div>
<svg style="position:absolute;left:184.5px;top:1279.8px;overflow:visible;" width="29" height="29" viewBox="0 0 16 16" fill="none"><rect x=".75" y=".75" width="14.5" height="14.5" rx="2.6" stroke="#8aadf4" stroke-width="1"/><path transform="translate(0 0) scale(1.0)" d="M5.5 7.95h4.1M7.55 7.95v6.15M14.05 8.8c-.35-.55-.9-.85-1.55-.85-.9 0-1.55.55-1.55 1.35 0 1.75 3.2 1.15 3.2 3.05 0 .8-.7 1.45-1.7 1.45-.75 0-1.35-.35-1.7-.9" stroke="#8aadf4" stroke-width=".95" fill="none" stroke-linecap="round" stroke-linejoin="round"/></svg>
<div style="position:absolute;left:227px;top:1273px;height:44px;line-height:44px;font-family:'Liberation Sans';font-size:26.8px;font-weight:normal;color:#cad3f5;white-space:pre;">helpers.ts</div>
<svg style="position:absolute;left:184.5px;top:1323.8px;overflow:visible;" width="29" height="29" viewBox="0 0 16 16" fill="none"><rect x=".75" y=".75" width="14.5" height="14.5" rx="2.6" stroke="#8aadf4" stroke-width="1"/><path transform="translate(0 0) scale(1.0)" d="M5.5 7.95h4.1M7.55 7.95v6.15M14.05 8.8c-.35-.55-.9-.85-1.55-.85-.9 0-1.55.55-1.55 1.35 0 1.75 3.2 1.15 3.2 3.05 0 .8-.7 1.45-1.7 1.45-.75 0-1.35-.35-1.7-.9" stroke="#8aadf4" stroke-width=".95" fill="none" stroke-linecap="round" stroke-linejoin="round"/></svg>
<div style="position:absolute;left:227px;top:1317px;height:44px;line-height:44px;font-family:'Liberation Sans';font-size:26.8px;font-weight:normal;color:#cad3f5;white-space:pre;">main.ts</div>
<svg style="position:absolute;left:184.5px;top:1367.8px;overflow:visible;" width="29" height="29" viewBox="0 0 16 16" fill="none"><rect x=".75" y=".75" width="14.5" height="14.5" rx="2.6" stroke="#8aadf4" stroke-width="1"/><path transform="translate(0 0) scale(1.0)" d="M5.5 7.95h4.1M7.55 7.95v6.15M14.05 8.8c-.35-.55-.9-.85-1.55-.85-.9 0-1.55.55-1.55 1.35 0 1.75 3.2 1.15 3.2 3.05 0 .8-.7 1.45-1.7 1.45-.75 0-1.35-.35-1.7-.9" stroke="#8aadf4" stroke-width=".95" fill="none" stroke-linecap="round" stroke-linejoin="round"/></svg>
<div style="position:absolute;left:227px;top:1361px;height:44px;line-height:44px;font-family:'Liberation Sans';font-size:26.8px;font-weight:normal;color:#cad3f5;white-space:pre;">utils.ts</div>
<svg style="position:absolute;left:138px;top:1414px;" width="16" height="24" viewBox="0 0 16 24" fill="none"><path d="M1.7 2.3 L11.6 12 L1.7 21.4" stroke="#c6a0f6" stroke-width="1.7" fill="none" stroke-linecap="round" stroke-linejoin="round"/></svg>
<svg style="position:absolute;left:164px;top:1410px;" width="36" height="36" viewBox="0 0 36 36" fill="none"><path d="M15.4 26.1H6.1a3 3 0 0 1-3-3V8.9a3 3 0 0 1 3-3h8.7a2.2 2.2 0 0 1 2.2 2.2V10" stroke="#c3c9ea" stroke-width="2" stroke-linecap="round" stroke-linejoin="round"/><path d="M9.2 10h17.5a3 3 0 0 1 3 3v1.4" stroke="#c3c9ea" stroke-width="2" stroke-linecap="round" stroke-linejoin="round"/><path d="M30.4 17.2c-1.4-.3-6.6 4.6-7.6 6.4l1.6 1.6c1.8-1 6.4-6.6 6-8z" stroke="#8aadf4" stroke-width="1.6" stroke-linecap="round" stroke-linejoin="round"/><path d="M22.4 24.2c-1.6 0-2.8 1-3.4 2.6-.5 1.3-.6 2.5-1.2 3.4 2.4.6 4.6-.2 5.6-1.6.8-1.2.6-3-1-4.4z" stroke="#8aadf4" stroke-width="1.6" stroke-linecap="round" stroke-linejoin="round"/></svg>
<div style="position:absolute;left:211px;top:1405px;height:44px;line-height:44px;font-family:'Liberation Sans';font-size:26.8px;font-weight:normal;color:#6e738d;white-space:pre;">themes</div>
<svg style="position:absolute;left:167.5px;top:1455.5px;overflow:visible;" width="29" height="29" viewBox="0 0 16 16" fill="none"><path d="M3.2 6.6C1.6 7.6.9 9.4 1.4 11.2c.7 2.6 3.4 4.1 6.2 3.4 2.9-.7 4.8-3.3 4.2-5.9-.3-1.2-1-2.1-2-2.7" stroke="#f4dbd6" stroke-width=".9" stroke-linecap="round" stroke-linejoin="round"/><path d="M3.3 6.5C2 6 1.5 4.9 2 3.9s1.8-1.3 3-.8M9.3 5.9c.4-1.1 1.7-1.6 2.8-1.1 1 .5 1.4 1.8.8 2.9-.4.8-1.3 1.2-2.1 1.1M5.3 3.4c.2-1.3 1.4-2.2 2.6-2 1.3.2 2 1.3 1.9 2.6" stroke="#f4dbd6" stroke-width=".9" stroke-linecap="round" stroke-linejoin="round"/><ellipse cx="4.2" cy="8.4" rx="2.3" ry="1.1" stroke="#f4dbd6" stroke-width=".85" transform="rotate(12 4.2 8.4)"/><ellipse cx="8.6" cy="8.9" rx="2.3" ry="1.1" stroke="#f4dbd6" stroke-width=".85" transform="rotate(12 8.6 8.9)"/></svg>
<div style="position:absolute;left:211px;top:1449px;height:44px;line-height:44px;font-family:'Liberation Sans';font-size:26.8px;font-weight:normal;color:#cad3f5;white-space:pre;">.editorconfig</div>
<svg style="position:absolute;left:167.5px;top:1499.5px;overflow:visible;" width="29" height="29" viewBox="0 0 16 16" fill="none"><rect x=".7" y="3.4" width="11.2" height="11.6" rx="1.8" stroke="#a6da95" stroke-width=".9" stroke-linecap="round" stroke-linejoin="round"/><path d="M3.2 3.4l1.4-2.1c.3-.4.7-.6 1.2-.6h7.8c.9 0 1.7.8 1.7 1.7v7.7c0 .5-.2.9-.5 1.2l-2.9 2.8M11.9 4.7l3.3-3.2" stroke="#a6da95" stroke-width=".9" stroke-linecap="round" stroke-linejoin="round"/><path d="M5.3 8.2c-.2-.45-.6-.65-1.05-.65-.6 0-1.05.4-1.05.9 0 1.25 2.2.85 2.2 2.15 0 .55-.5 1-1.15 1-.5 0-.95-.25-1.15-.65M4.25 6.8v5.6" stroke="#a6da95" stroke-width=".75" stroke-linecap="round" stroke-linejoin="round"/></svg>
<div style="position:absolute;left:211px;top:1493px;height:44px;line-height:44px;font-family:'Liberation Sans';font-size:26.8px;font-weight:normal;color:#cad3f5;white-space:pre;">.envrc</div>
<svg style="position:absolute;left:167.5px;top:1543.5px;overflow:visible;" width="29" height="29" viewBox="0 0 16 16" fill="none"><path d="M4.2 1h7.6l3.8 7-3.8 7H4.2L.4 8z" stroke="#8087a2" stroke-width=".9" stroke-linecap="round" stroke-linejoin="round"/><path d="M8 4l3.4 2v4L8 12l-3.4-2V6z" stroke="#8087a2" stroke-width=".9" stroke-linecap="round" stroke-linejoin="round"/></svg>
<div style="position:absolute;left:211px;top:1537px;height:44px;line-height:44px;font-family:'Liberation Sans';font-size:26.8px;font-weight:normal;color:#cad3f5;white-space:pre;">.eslintignore</div>
<svg style="position:absolute;left:167.5px;top:1587.5px;overflow:visible;" width="29" height="29" viewBox="0 0 16 16" fill="none"><path d="M8 .7L15.3 8 8 15.3.7 8z" stroke="#f5a97f" stroke-width=".9" stroke-linecap="round" stroke-linejoin="round"/><path d="M6.3 4.6v6.4M6.7 4.9l2.9 3" stroke="#b7bdf8" stroke-width=".8"/><circle cx="6.3" cy="4.4" r="1" fill="#1e2030" stroke="#b7bdf8" stroke-width=".8"/><circle cx="9.9" cy="8.2" r="1" fill="#1e2030" stroke="#b7bdf8" stroke-width=".8"/><circle cx="6.3" cy="11.3" r="1" fill="#1e2030" stroke="#b7bdf8" stroke-width=".8"/></svg>
<div style="position:absolute;left:211px;top:1581px;height:44px;line-height:44px;font-family:'Liberation Sans';font-size:26.8px;font-weight:normal;color:#cad3f5;white-space:pre;">.gitignore</div>
<svg style="position:absolute;left:167.5px;top:1631.5px;overflow:visible;" width="29" height="29" viewBox="0 0 16 16" fill="none"><path d="M11.3.8l4.1 1.9v10.6l-4.1 1.9L1 5.6l1.6-1.4z" stroke="#8087a2" stroke-width=".9" stroke-linecap="round" stroke-linejoin="round"/><path d="M11.3 .8v14.4M11.3 4.6L5.6 9.4M3.7 11l-1.1 1-1.6-1.4 1.6-1.5" stroke="#8087a2" stroke-width=".9" stroke-linecap="round" stroke-linejoin="round"/></svg>
<div style="position:absolute;left:211px;top:1625px;height:44px;line-height:44px;font-family:'Liberation Sans';font-size:26.8px;font-weight:normal;color:#cad3f5;white-space:pre;">.vscodeignore</div>
<svg style="position:absolute;left:167.5px;top:1675.5px;overflow:visible;" width="29" height="29" viewBox="0 0 16 16" fill="none"><path d="M5.2.8c.5.9.7 2 .9 2.8 1.1-.5 1.9-.4 2.5.1.2 1.1-.2 2.1-.7 2.9 1.3 1.3 1.8 3.1 1.3 5.1 1.4.1 2.6-.2 3.6-.9.6-.4 1.1.1.6.7-1.1 1.4-3.3 2.4-5.5 2.6-1.7 1.1-4.1 1.4-6.1 1.3-.5-.8-.3-1.9.3-2.6.1-2 .1-3.4.4-4.6.4-1.5 1.1-2.2 1.9-2.7-.3-1.1-.3-2.3.1-3.1z" stroke="#7dc4e4" stroke-width=".9" stroke-linecap="round" stroke-linejoin="round"/></svg>
<div style="position:absolute;left:211px;top:1669px;height:44px;line-height:44px;font-family:'Liberation Sans';font-size:26.8px;font-weight:normal;color:#cad3f5;white-space:pre;">.yarnrc.yml</div>
<svg style="position:absolute;left:167.5px;top:1719.5px;overflow:visible;" width="29" height="29" viewBox="0 0 16 16" fill="none"><path d="M9.6 14.9A7.1 7.1 0 1 1 15.1 8M8 3.8v4.6L6.3 10.2M10.9 13.4l-1.3 1.5 1.6 1" stroke="#91d7e3" stroke-width=".9" stroke-linecap="round" stroke-linejoin="round"/></svg>
<div style="position:absolute;left:211px;top:1713px;height:44px;line-height:44px;font-family:'Liberation Sans';font-size:26.8px;font-weight:normal;color:#cad3f5;white-space:pre;">CHANGELOG.md</div>
<svg style="position:absolute;left:167.5px;top:1763.5px;overflow:visible;" width="29" height="29" viewBox="0 0 16 16" fill="none"><rect x=".7" y="1.7" width="14.6" height="12.6" rx="1.6" stroke="#8bd5ca" stroke-width=".9" stroke-linecap="round" stroke-linejoin="round"/><path d="M1.2 13.6l4.8-4.8 3.2 3 1.8-1.6 3.8 3.4" stroke="#a6da95" stroke-width=".9" stroke-linecap="round" stroke-linejoin="round"/><circle cx="11.2" cy="5.2" r="1.2" stroke="#eed49f" stroke-width=".85"/></svg>
<div style="position:absolute;left:211px;top:1757px;height:44px;line-height:44px;font-family:'Liberation Sans';font-size:26.8px;font-weight:normal;color:#cad3f5;white-space:pre;">icon.png</div>
<svg style="position:absolute;left:167.5px;top:1807.5px;overflow:visible;" width="29" height="29" viewBox="0 0 16 16" fill="none"><path d="M8 .8v14M5 14.8h6M1.8 3.3h12.4" stroke="#f5a97f" stroke-width=".9" stroke-linecap="round" stroke-linejoin="round"/><path d="M2.9 3.6L.5 9.4h4.8zM13.1 3.6l-2.4 5.8h4.8z" stroke="#f5a97f" stroke-width=".9" stroke-linecap="round" stroke-linejoin="round"/><path d="M.5 9.4c.3 1.3 1.2 2 2.4 2s2.1-.7 2.4-2M10.7 9.4c.3 1.3 1.2 2 2.4 2s2.1-.7 2.4-2" stroke="#f5a97f" stroke-width=".9" stroke-linecap="round" stroke-linejoin="round"/></svg>
<div style="position:absolute;left:211px;top:1801px;height:44px;line-height:44px;font-family:'Liberation Sans';font-size:26.8px;font-weight:normal;color:#cad3f5;white-space:pre;">LICENSE</div>
<svg style="position:absolute;left:167.5px;top:1851.5px;overflow:visible;" width="29" height="29" viewBox="0 0 16 16" fill="none"><path d="M8 .5l6.8 3.9v7.2L8 15.5 1.2 11.6V4.4z" stroke="#a6da95" stroke-width=".9" stroke-linecap="round" stroke-linejoin="round"/><path d="M6.3 5v5.4c0 .9-.5 1.4-1.3 1.4-.5 0-.8-.2-1.1-.5M11.6 5.9c-.3-.6-.9-1-1.6-1-.8 0-1.5.5-1.5 1.3 0 1.7 3.2 1.1 3.2 3 0 .8-.7 1.4-1.7 1.4-.8 0-1.4-.4-1.7-.9" stroke="#a6da95" stroke-width=".85" stroke-linecap="round" stroke-linejoin="round"/></svg>
<div style="position:absolute;left:211px;top:1845px;height:44px;line-height:44px;font-family:'Liberation Sans';font-size:26.8px;font-weight:normal;color:#cad3f5;white-space:pre;">package.json</div>
<div style="position:absolute;left:98px;top:1878px;width:468px;height:44px;background:#1e2030;"></div>
<svg style="position:absolute;left:112px;top:1888px;" width="16" height="24" viewBox="0 0 16 24" fill="none"><path d="M1.7 2.3 L11.6 12 L1.7 21.4" stroke="#c6a0f6" stroke-width="1.7" fill="none" stroke-linecap="round" stroke-linejoin="round"/></svg>
<div style="position:absolute;left:139px;top:1883px;height:36px;line-height:36px;font-family:'Liberation Sans';font-size:22px;font-weight:bold;color:#cad3f5;white-space:pre;">OUTLINE</div>
<svg style="position:absolute;left:107px;top:144px;" width="24" height="14" viewBox="0 0 24 14" fill="none"><path d="M1.3 2 L10.9 11.8 L20.6 2" stroke="#c6a0f6" stroke-width="1.7" fill="none" stroke-linecap="round" stroke-linejoin="round"/></svg>
<div style="left:503.5px;top:90.5px;width:5px;height:5px;border-radius:50%;background:#cad3f5"></div>
<div style="left:514.5px;top:90.5px;width:5px;height:5px;border-radius:50%;background:#cad3f5"></div>
<div style="left:525.5px;top:90.5px;width:5px;height:5px;border-radius:50%;background:#cad3f5"></div>
<div style="position:absolute;left:566px;top:900px;width:2150px;height:46px;background:#2d3146;"></div>
<div style="position:absolute;left:718px;top:440px;width:2px;height:1482px;background:#3d4157;"></div>
<div style="position:absolute;left:754px;top:624px;width:2px;height:230px;background:#3d4157;"></div>
<div style="position:absolute;left:790px;top:670px;width:2px;height:138px;background:#3d4157;"></div>
<div style="position:absolute;left:754px;top:1038px;width:2px;height:884px;background:#3d4157;"></div>
<div style="position:absolute;left:790px;top:1084px;width:2px;height:92px;background:#3d4157;"></div>
<div style="position:absolute;left:790px;top:1222px;width:2px;height:644px;background:#3d4157;"></div>
<div style="position:absolute;left:826px;top:1268px;width:2px;height:92px;background:#3d4157;"></div>
<div style="position:absolute;left:826px;top:1406px;width:2px;height:184px;background:#3d4157;"></div>
<div style="position:absolute;left:826px;top:1682px;width:2px;height:138px;background:#3d4157;"></div>
<div style="position:absolute;left:862px;top:1728px;width:2px;height:92px;background:#3d4157;"></div>
<div style="left:1258px;top:394px;width:18px;height:46px;box-sizing:border-box;border:2px solid #a3a9c4;background:#2e3245;"></div>
<div class="code" style="left:718.5px;top:213px;"><span style="color:#c6a0f6;">import</span><span style="color:#cad3f5;"> </span><span style="color:#ed8796;">{</span><span style="color:#cad3f5;"> workspace</span><span style="color:#939ab7;">,</span><span style="color:#cad3f5;"> ConfigurationChangeEvent</span><span style="color:#939ab7;">,</span><span style="color:#cad3f5;"> extensions </span><span style="color:#ed8796;">}</span><span style="color:#cad3f5;"> </span><span style="color:#c6a0f6;">from</span><span style="color:#cad3f5;"> </span><span style="color:#a6da95;">&quot;vscode&quot;</span><span style="color:#939ab7;">;</span></div>
<div class="code" style="left:718.5px;top:259px;"><span style="color:#c6a0f6;">import</span><span style="color:#cad3f5;"> </span><span style="color:#ed8796;">{</span><span style="color:#cad3f5;"> getThemePaths </span><span style="color:#ed8796;">}</span><span style="color:#cad3f5;"> </span><span style="color:#c6a0f6;">from</span><span style="color:#cad3f5;"> </span><span style="color:#a6da95;">&quot;./helpers&quot;</span><span style="color:#939ab7;">;</span></div>
<div class="code" style="left:718.5px;top:305px;"><span style="color:#c6a0f6;">import</span><span style="color:#cad3f5;"> utils</span><span style="color:#939ab7;">,</span><span style="color:#cad3f5;"> </span><span style="color:#ed8796;">{</span><span style="color:#cad3f5;"> UpdateTrigger </span><span style="color:#ed8796;">}</span><span style="color:#cad3f5;"> </span><span style="color:#c6a0f6;">from</span><span style="color:#cad3f5;"> </span><span style="color:#a6da95;">&quot;./utils&quot;</span><span style="color:#939ab7;">;</span></div>
<div class="code" style="left:718.5px;top:397px;"><span style="color:#c6a0f6;">export</span><span style="color:#cad3f5;"> </span><span style="color:#c6a0f6;">const</span><span style="color:#cad3f5;"> </span><span style="color:#8aadf4;font-style:italic;">activate</span><span style="color:#cad3f5;"> </span><span style="color:#8bd5ca;">=</span><span style="color:#cad3f5;"> </span><span style="color:#ed8796;">()</span><span style="color:#cad3f5;"> </span><span style="color:#8bd5ca;">=&gt;</span><span style="color:#cad3f5;"> </span><span style="color:#ed8796;">{</span></div>
<div class="code" style="left:718.5px;top:443px;"><span style="color:#cad3f5;">  </span><span style="color:#c6a0f6;">const</span><span style="color:#cad3f5;"> paths </span><span style="color:#8bd5ca;">=</span><span style="color:#cad3f5;"> </span><span style="color:#8aadf4;font-style:italic;">getThemePaths</span><span style="color:#f5a97f;">()</span><span style="color:#939ab7;">;</span></div>
<div class="code" style="left:718.5px;top:535px;"><span style="color:#73788f;font-style:italic;">  // regenerate on a fresh install if non-default config is set</span></div>
<div class="code" style="left:718.5px;top:581px;"><span style="color:#cad3f5;">  </span><span style="color:#c6a0f6;">if</span><span style="color:#cad3f5;"> </span><span style="color:#f5a97f;">(</span><span style="color:#cad3f5;">utils</span><span style="color:#8bd5ca;">.</span><span style="color:#8aadf4;font-style:italic;">isFreshInstall</span><span style="color:#eed49f;">()</span><span style="color:#cad3f5;"> </span><span style="color:#8bd5ca;">&amp;&amp;</span><span style="color:#cad3f5;"> </span><span style="color:#8bd5ca;">!</span><span style="color:#cad3f5;">utils</span><span style="color:#8bd5ca;">.</span><span style="color:#8aadf4;font-style:italic;">isDefaultConfig</span><span style="color:#eed49f;">()</span><span style="color:#f5a97f;">)</span><span style="color:#cad3f5;"> </span><span style="color:#f5a97f;">{</span></div>
<div class="code" style="left:718.5px;top:627px;"><span style="color:#cad3f5;">    utils</span><span style="color:#8bd5ca;">.</span><span style="color:#8aadf4;font-style:italic;">updateThemes</span><span style="color:#eed49f;">(</span></div>
<div class="code" style="left:718.5px;top:673px;"><span style="color:#cad3f5;">      </span><span class="hint"><span>options:</span></span><span style="color:#cad3f5;">utils</span><span style="color:#8bd5ca;">.</span><span style="color:#8aadf4;font-style:italic;">getConfiguration</span><span style="color:#a6da95;">()</span><span style="color:#939ab7;">,</span></div>
<div class="code" style="left:718.5px;top:719px;"><span style="color:#cad3f5;">      paths</span><span style="color:#939ab7;">,</span></div>
<div class="code" style="left:718.5px;top:765px;"><span style="color:#cad3f5;">      </span><span class="hint"><span>trigger:</span></span><span style="color:#eed49f;font-style:italic;">UpdateTrigger</span><span style="color:#8bd5ca;">.</span><span style="color:#8bd5ca;">FRESH_INSTALL</span><span style="color:#939ab7;">,</span></div>
<div class="code" style="left:718.5px;top:811px;"><span style="color:#cad3f5;">    </span><span style="color:#eed49f;">)</span><span style="color:#939ab7;">;</span></div>
<div class="code" style="left:718.5px;top:857px;"><span style="color:#cad3f5;">  </span><span style="color:#f5a97f;">}</span></div>
<div class="code" style="left:718.5px;top:949px;"><span style="color:#73788f;font-style:italic;">  // regenerate the theme files when the config changes</span></div>
<div class="code" style="left:718.5px;top:995px;"><span style="color:#cad3f5;">  </span><span style="color:#eed49f;font-style:italic;">workspace</span><span style="color:#8bd5ca;">.</span><span style="color:#8aadf4;font-style:italic;">onDidChangeConfiguration</span><span style="color:#f5a97f;">(</span><span class="hint"><span>listener:</span></span><span style="color:#eed49f;">(</span><span style="color:#ee99a0;font-style:italic;">event</span><span style="color:#8bd5ca;">:</span><span style="color:#cad3f5;"> </span><span style="color:#eed49f;font-style:italic;">ConfigurationChangeEvent</span><span style="color:#eed49f;">)</span><span style="color:#cad3f5;"> </span><span style="color:#8bd5ca;">=&gt;</span><span style="color:#cad3f5;"> </span><span style="color:#eed49f;">{</span></div>
<div class="code" style="left:718.5px;top:1041px;"><span style="color:#cad3f5;">    </span><span style="color:#c6a0f6;">if</span><span style="color:#cad3f5;"> </span><span style="color:#a6da95;">(</span></div>
<div class="code" style="left:718.5px;top:1087px;"><span style="color:#cad3f5;">      </span><span style="color:#ee99a0;font-style:italic;">event</span><span style="color:#8bd5ca;">.</span><span style="color:#8aadf4;font-style:italic;">affectsConfiguration</span><span style="color:#7dc4e4;">(</span><span class="hint"><span>section:</span></span><span style="color:#a6da95;">&quot;workbench.colorTheme&quot;</span><span style="color:#7dc4e4;">)</span><span style="color:#cad3f5;"> </span><span style="color:#8bd5ca;">&amp;&amp;</span></div>
<div class="code" style="left:718.5px;top:1133px;"><span style="color:#cad3f5;">      </span><span style="color:#eed49f;font-style:italic;">extensions</span><span style="color:#8bd5ca;">.</span><span style="color:#8aadf4;font-style:italic;">getExtension</span><span style="color:#7dc4e4;">(</span><span class="hint"><span>extensionId:</span></span><span style="color:#a6da95;">&quot;catppuccin.catppuccin-vsc-icons&quot;</span><span style="color:#7dc4e4;">)</span></div>
<div class="code" style="left:718.5px;top:1179px;"><span style="color:#cad3f5;">    </span><span style="color:#a6da95;">)</span><span style="color:#cad3f5;"> </span><span style="color:#a6da95;">{</span></div>
<div class="code" style="left:718.5px;top:1225px;"><span style="color:#cad3f5;">      </span><span style="color:#c6a0f6;">const</span><span style="color:#cad3f5;"> theme </span><span style="color:#8bd5ca;">=</span><span style="color:#cad3f5;"> </span><span style="color:#eed49f;font-style:italic;">workspace</span></div>
<div class="code" style="left:718.5px;top:1271px;"><span style="color:#cad3f5;">        </span><span style="color:#8bd5ca;">.</span><span style="color:#8aadf4;font-style:italic;">getConfiguration</span><span style="color:#7dc4e4;">(</span><span class="hint"><span>section:</span></span><span style="color:#a6da95;">&quot;workbench&quot;</span><span style="color:#7dc4e4;">)</span></div>
<div class="code" style="left:718.5px;top:1317px;"><span style="color:#cad3f5;">        </span><span style="color:#8bd5ca;">.</span><span style="color:#8aadf4;font-style:italic;">get</span><span style="color:#8bd5ca;">&lt;</span><span style="color:#c6a0f6;">string</span><span style="color:#8bd5ca;">&gt;</span><span style="color:#7dc4e4;">(</span><span class="hint"><span>section:</span></span><span style="color:#a6da95;">&quot;colorTheme&quot;</span><span style="color:#7dc4e4;">)</span><span style="color:#939ab7;">;</span></div>
<div class="code" style="left:718.5px;top:1363px;"><span style="color:#cad3f5;">      </span><span style="color:#c6a0f6;">const</span><span style="color:#cad3f5;"> ctp_themes </span><span style="color:#8bd5ca;">=</span><span style="color:#cad3f5;"> </span><span style="color:#7dc4e4;">{</span></div>
<div class="code" style="left:718.5px;top:1409px;"><span style="color:#cad3f5;">        </span><span style="color:#a6da95;">&quot;Catppuccin Latte&quot;</span><span style="color:#8bd5ca;">:</span><span style="color:#cad3f5;"> </span><span style="color:#a6da95;">&quot;catppuccin-latte&quot;</span><span style="color:#939ab7;">,</span></div>
<div class="code" style="left:718.5px;top:1455px;"><span style="color:#cad3f5;">        </span><span style="color:#a6da95;">&quot;Catppuccin Frappé&quot;</span><span style="color:#8bd5ca;">:</span><span style="color:#cad3f5;"> </span><span style="color:#a6da95;">&quot;catppuccin-frappe&quot;</span><span style="color:#939ab7;">,</span></div>
<div class="code" style="left:718.5px;top:1501px;"><span style="color:#cad3f5;">        </span><span style="color:#a6da95;">&quot;Catppuccin Macchiato&quot;</span><span style="color:#8bd5ca;">:</span><span style="color:#cad3f5;"> </span><span style="color:#a6da95;">&quot;catppuccin-macchiato&quot;</span><span style="color:#939ab7;">,</span></div>
<div class="code" style="left:718.5px;top:1547px;"><span style="color:#cad3f5;">        </span><span style="color:#a6da95;">&quot;Catppuccin Mocha&quot;</span><span style="color:#8bd5ca;">:</span><span style="color:#cad3f5;"> </span><span style="color:#a6da95;">&quot;catppuccin-mocha&quot;</span><span style="color:#939ab7;">,</span></div>
<div class="code" style="left:718.5px;top:1593px;"><span style="color:#cad3f5;">      </span><span style="color:#7dc4e4;">}</span><span style="color:#939ab7;">;</span></div>
<div class="code" style="left:718.5px;top:1639px;"><span style="color:#cad3f5;">      </span><span style="color:#c6a0f6;">if</span><span style="color:#cad3f5;"> </span><span style="color:#7dc4e4;">(</span><span style="color:#eed49f;font-style:italic;">Object</span><span style="color:#8bd5ca;">.</span><span style="color:#8aadf4;font-style:italic;">keys</span><span style="color:#c6a0f6;">(</span><span class="hint"><span>o:</span></span><span style="color:#cad3f5;">ctp_themes</span><span style="color:#c6a0f6;">)</span><span style="color:#8bd5ca;">.</span><span style="color:#8aadf4;font-style:italic;">includes</span><span style="color:#c6a0f6;">(</span><span class="hint"><span>searchElement:</span></span><span style="color:#cad3f5;">theme</span><span style="color:#c6a0f6;">)</span><span style="color:#7dc4e4;">)</span><span style="color:#cad3f5;"> </span><span style="color:#7dc4e4;">{</span></div>
<div class="code" style="left:718.5px;top:1685px;"><span style="color:#cad3f5;">        </span><span style="color:#eed49f;font-style:italic;">workspace</span></div>
<div class="code" style="left:718.5px;top:1731px;"><span style="color:#cad3f5;">          </span><span style="color:#8bd5ca;">.</span><span style="color:#8aadf4;font-style:italic;">getConfiguration</span><span style="color:#c6a0f6;">(</span><span class="hint"><span>section:</span></span><span style="color:#a6da95;">&quot;workbench&quot;</span><span style="color:#c6a0f6;">)</span></div>
<div class="code" style="left:718.5px;top:1777px;"><span style="color:#cad3f5;">          </span><span style="color:#8bd5ca;">.</span><span style="color:#8aadf4;font-style:italic;">update</span><span style="color:#c6a0f6;">(</span><span class="hint"><span>section:</span></span><span style="color:#a6da95;">&quot;iconTheme&quot;</span><span style="color:#939ab7;">,</span><span style="color:#cad3f5;"> </span><span class="hint"><span>value:</span></span><span style="color:#cad3f5;">ctp_themes</span><span style="color:#ed8796;">[</span><span style="color:#cad3f5;">theme</span><span style="color:#ed8796;">]</span><span style="color:#939ab7;">,</span><span style="color:#cad3f5;"> </span><span class="hint"><span>configurationTarget:</span></span><span style="color:#f5a97f;">true</span><span style="color:#c6a0f6;">)</span><span style="color:#939ab7;">;</span></div>
<div class="code" style="left:718.5px;top:1823px;"><span style="color:#cad3f5;">      </span><span style="color:#7dc4e4;">}</span></div>
<div class="code" style="left:718.5px;top:1869px;"><span style="color:#cad3f5;">    </span><span style="color:#a6da95;">}</span></div>
<div style="position:absolute;right:2284px;top:213px;height:46px;line-height:46px;font-family:'Liberation Mono';font-size:29.92px;font-weight:normal;color:#8087a2;white-space:pre;-webkit-text-stroke:0.4px currentColor;">15</div>
<div style="position:absolute;right:2284px;top:259px;height:46px;line-height:46px;font-family:'Liberation Mono';font-size:29.92px;font-weight:normal;color:#8087a2;white-space:pre;-webkit-text-stroke:0.4px currentColor;">14</div>
<div style="position:absolute;right:2284px;top:305px;height:46px;line-height:46px;font-family:'Liberation Mono';font-size:29.92px;font-weight:normal;color:#8087a2;white-space:pre;-webkit-text-stroke:0.4px currentColor;">13</div>
<div style="position:absolute;right:2284px;top:351px;height:46px;line-height:46px;font-family:'Liberation Mono';font-size:29.92px;font-weight:normal;color:#8087a2;white-space:pre;-webkit-text-stroke:0.4px currentColor;">12</div>
<div style="position:absolute;right:2284px;top:397px;height:46px;line-height:46px;font-family:'Liberation Mono';font-size:29.92px;font-weight:normal;color:#8087a2;white-space:pre;-webkit-text-stroke:0.4px currentColor;">11</div>
<div style="position:absolute;right:2284px;top:443px;height:46px;line-height:46px;font-family:'Liberation Mono';font-size:29.92px;font-weight:normal;color:#8087a2;white-space:pre;-webkit-text-stroke:0.4px currentColor;">10</div>
<div style="position:absolute;right:2284px;top:489px;height:46px;line-height:46px;font-family:'Liberation Mono';font-size:29.92px;font-weight:normal;color:#8087a2;white-space:pre;-webkit-text-stroke:0.4px currentColor;">9</div>
<div style="position:absolute;right:2284px;top:535px;height:46px;line-height:46px;font-family:'Liberation Mono';font-size:29.92px;font-weight:normal;color:#8087a2;white-space:pre;-webkit-text-stroke:0.4px currentColor;">8</div>
<div style="position:absolute;right:2284px;top:581px;height:46px;line-height:46px;font-family:'Liberation Mono';font-size:29.92px;font-weight:normal;color:#8087a2;white-space:pre;-webkit-text-stroke:0.4px currentColor;">7</div>
<div style="position:absolute;right:2284px;top:627px;height:46px;line-height:46px;font-family:'Liberation Mono';font-size:29.92px;font-weight:normal;color:#8087a2;white-space:pre;-webkit-text-stroke:0.4px currentColor;">6</div>
<div style="position:absolute;right:2284px;top:673px;height:46px;line-height:46px;font-family:'Liberation Mono';font-size:29.92px;font-weight:normal;color:#8087a2;white-space:pre;-webkit-text-stroke:0.4px currentColor;">5</div>
<div style="position:absolute;right:2284px;top:719px;height:46px;line-height:46px;font-family:'Liberation Mono';font-size:29.92px;font-weight:normal;color:#8087a2;white-space:pre;-webkit-text-stroke:0.4px currentColor;">4</div>
<div style="position:absolute;right:2284px;top:765px;height:46px;line-height:46px;font-family:'Liberation Mono';font-size:29.92px;font-weight:normal;color:#8087a2;white-space:pre;-webkit-text-stroke:0.4px currentColor;">3</div>
<div style="position:absolute;right:2284px;top:811px;height:46px;line-height:46px;font-family:'Liberation Mono';font-size:29.92px;font-weight:normal;color:#8087a2;white-space:pre;-webkit-text-stroke:0.4px currentColor;">2</div>
<div style="position:absolute;right:2284px;top:857px;height:46px;line-height:46px;font-family:'Liberation Mono';font-size:29.92px;font-weight:normal;color:#8087a2;white-space:pre;-webkit-text-stroke:0.4px currentColor;">1</div>
<div style="position:absolute;left:611.5px;top:903px;height:46px;line-height:46px;font-family:'Liberation Mono';font-size:29.92px;font-weight:normal;color:#c6a0f6;white-space:pre;-webkit-text-stroke:0.4px currentColor;">16</div>
<div style="position:absolute;right:2284px;top:949px;height:46px;line-height:46px;font-family:'Liberation Mono';font-size:29.92px;font-weight:normal;color:#8087a2;white-space:pre;-webkit-text-stroke:0.4px currentColor;">1</div>
<div style="position:absolute;right:2284px;top:995px;height:46px;line-height:46px;font-family:'Liberation Mono';font-size:29.92px;font-weight:normal;color:#8087a2;white-space:pre;-webkit-text-stroke:0.4px currentColor;">2</div>
<div style="position:absolute;right:2284px;top:1041px;height:46px;line-height:46px;font-family:'Liberation Mono';font-size:29.92px;font-weight:normal;color:#8087a2;white-space:pre;-webkit-text-stroke:0.4px currentColor;">3</div>
<div style="position:absolute;right:2284px;top:1087px;height:46px;line-height:46px;font-family:'Liberation Mono';font-size:29.92px;font-weight:normal;color:#8087a2;white-space:pre;-webkit-text-stroke:0.4px currentColor;">4</div>
<div style="position:absolute;right:2284px;top:1133px;height:46px;line-height:46px;font-family:'Liberation Mono';font-size:29.92px;font-weight:normal;color:#8087a2;white-space:pre;-webkit-text-stroke:0.4px currentColor;">5</div>
<div style="position:absolute;right:2284px;top:1179px;height:46px;line-height:46px;font-family:'Liberation Mono';font-size:29.92px;font-weight:normal;color:#8087a2;white-space:pre;-webkit-text-stroke:0.4px currentColor;">6</div>
<div style="position:absolute;right:2284px;top:1225px;height:46px;line-height:46px;font-family:'Liberation Mono';font-size:29.92px;font-weight:normal;color:#8087a2;white-space:pre;-webkit-text-stroke:0.4px currentColor;">7</div>
<div style="position:absolute;right:2284px;top:1271px;height:46px;line-height:46px;font-family:'Liberation Mono';font-size:29.92px;font-weight:normal;color:#8087a2;white-space:pre;-webkit-text-stroke:0.4px currentColor;">8</div>
<div style="position:absolute;right:2284px;top:1317px;height:46px;line-height:46px;font-family:'Liberation Mono';font-size:29.92px;font-weight:normal;color:#8087a2;white-space:pre;-webkit-text-stroke:0.4px currentColor;">9</div>
<div style="position:absolute;right:2284px;top:1363px;height:46px;line-height:46px;font-family:'Liberation Mono';font-size:29.92px;font-weight:normal;color:#8087a2;white-space:pre;-webkit-text-stroke:0.4px currentColor;">10</div>
<div style="position:absolute;right:2284px;top:1409px;height:46px;line-height:46px;font-family:'Liberation Mono';font-size:29.92px;font-weight:normal;color:#8087a2;white-space:pre;-webkit-text-stroke:0.4px currentColor;">11</div>
<div style="position:absolute;right:2284px;top:1455px;height:46px;line-height:46px;font-family:'Liberation Mono';font-size:29.92px;font-weight:normal;color:#8087a2;white-space:pre;-webkit-text-stroke:0.4px currentColor;">12</div>
<div style="position:absolute;right:2284px;top:1501px;height:46px;line-height:46px;font-family:'Liberation Mono';font-size:29.92px;font-weight:normal;color:#8087a2;white-space:pre;-webkit-text-stroke:0.4px currentColor;">13</div>
<div style="position:absolute;right:2284px;top:1547px;height:46px;line-height:46px;font-family:'Liberation Mono';font-size:29.92px;font-weight:normal;color:#8087a2;white-space:pre;-webkit-text-stroke:0.4px currentColor;">14</div>
<div style="position:absolute;right:2284px;top:1593px;height:46px;line-height:46px;font-family:'Liberation Mono';font-size:29.92px;font-weight:normal;color:#8087a2;white-space:pre;-webkit-text-stroke:0.4px currentColor;">15</div>
<div style="position:absolute;right:2284px;top:1639px;height:46px;line-height:46px;font-family:'Liberation Mono';font-size:29.92px;font-weight:normal;color:#8087a2;white-space:pre;-webkit-text-stroke:0.4px currentColor;">16</div>
<div style="position:absolute;right:2284px;top:1685px;height:46px;line-height:46px;font-family:'Liberation Mono';font-size:29.92px;font-weight:normal;color:#8087a2;white-space:pre;-webkit-text-stroke:0.4px currentColor;">17</div>
<div style="position:absolute;right:2284px;top:1731px;height:46px;line-height:46px;font-family:'Liberation Mono';font-size:29.92px;font-weight:normal;color:#8087a2;white-space:pre;-webkit-text-stroke:0.4px currentColor;">18</div>
<div style="position:absolute;right:2284px;top:1777px;height:46px;line-height:46px;font-family:'Liberation Mono';font-size:29.92px;font-weight:normal;color:#8087a2;white-space:pre;-webkit-text-stroke:0.4px currentColor;">19</div>
<div style="position:absolute;right:2284px;top:1823px;height:46px;line-height:46px;font-family:'Liberation Mono';font-size:29.92px;font-weight:normal;color:#8087a2;white-space:pre;-webkit-text-stroke:0.4px currentColor;">20</div>
<div style="position:absolute;right:2284px;top:1869px;height:46px;line-height:46px;font-family:'Liberation Mono';font-size:29.92px;font-weight:normal;color:#8087a2;white-space:pre;-webkit-text-stroke:0.4px currentColor;">21</div>
<div style="position:absolute;left:718px;top:900px;width:4px;height:46px;background:#f4dbd6;"></div>
<div style="position:absolute;left:2688px;top:172px;width:236px;height:1750px;background:#212436;"></div>
<div style="position:absolute;left:2688px;top:900px;width:28px;height:46px;background:#282b3f;"></div>
<div style="left:2696px;top:172px;height:4px;line-height:4px;font-family:'Liberation Mono';font-size:3.333px;font-weight:bold;white-space:pre;"><span style="color:#c6a0f6">import</span><span style="color:#cad3f5"> </span><span style="color:#ed8796">{</span><span style="color:#cad3f5"> workspace</span><span style="color:#939ab7">,</span><span style="color:#cad3f5"> ConfigurationChangeEvent</span><span style="color:#939ab7">,</span><span style="color:#cad3f5"> extensions </span><span style="color:#ed8796">}</span><span style="color:#cad3f5"> </span><span style="color:#c6a0f6">from</span><span style="color:#cad3f5"> </span><span style="color:#a6da95">&quot;vscode&quot;</span><span style="color:#939ab7">;</span></div><div style="left:2696px;top:176px;height:4px;line-height:4px;font-family:'Liberation Mono';font-size:3.333px;font-weight:bold;white-space:pre;"><span style="color:#c6a0f6">import</span><span style="color:#cad3f5"> </span><span style="color:#ed8796">{</span><span style="color:#cad3f5"> getThemePaths </span><span style="color:#ed8796">}</span><span style="color:#cad3f5"> </span><span style="color:#c6a0f6">from</span><span style="color:#cad3f5"> </span><span style="color:#a6da95">&quot;./helpers&quot;</span><span style="color:#939ab7">;</span></div><div style="left:2696px;top:180px;height:4px;line-height:4px;font-family:'Liberation Mono';font-size:3.333px;font-weight:bold;white-space:pre;"><span style="color:#c6a0f6">import</span><span style="color:#cad3f5"> utils</span><span style="color:#939ab7">,</span><span style="color:#cad3f5"> </span><span style="color:#ed8796">{</span><span style="color:#cad3f5"> UpdateTrigger </span><span style="color:#ed8796">}</span><span style="color:#cad3f5"> </span><span style="color:#c6a0f6">from</span><span style="color:#cad3f5"> </span><span style="color:#a6da95">&quot;./utils&quot;</span><span style="color:#939ab7">;</span></div><div style="left:2696px;top:184px;height:4px;line-height:4px;font-family:'Liberation Mono';font-size:3.333px;font-weight:bold;white-space:pre;"></div><div style="left:2696px;top:188px;height:4px;line-height:4px;font-family:'Liberation Mono';font-size:3.333px;font-weight:bold;white-space:pre;"><span style="color:#c6a0f6">export</span><span style="color:#cad3f5"> </span><span style="color:#c6a0f6">const</span><span style="color:#cad3f5"> </span><span style="color:#8aadf4">activate</span><span style="color:#cad3f5"> </span><span style="color:#8bd5ca">=</span><span style="color:#cad3f5"> </span><span style="color:#ed8796">()</span><span style="color:#cad3f5"> </span><span style="color:#8bd5ca">=&gt;</span><span style="color:#cad3f5"> </span><span style="color:#ed8796">{</span></div><div style="left:2696px;top:192px;height:4px;line-height:4px;font-family:'Liberation Mono';font-size:3.333px;font-weight:bold;white-space:pre;"><span style="color:#cad3f5">  </span><span style="color:#c6a0f6">const</span><span style="color:#cad3f5"> paths </span><span style="color:#8bd5ca">=</span><span style="color:#cad3f5"> </span><span style="color:#8aadf4">getThemePaths</span><span style="color:#f5a97f">()</span><span style="color:#939ab7">;</span></div><div style="left:2696px;top:196px;height:4px;line-height:4px;font-family:'Liberation Mono';font-size:3.333px;font-weight:bold;white-space:pre;"></div><div style="left:2696px;top:200px;height:4px;line-height:4px;font-family:'Liberation Mono';font-size:3.333px;font-weight:bold;white-space:pre;"><span style="color:#73788f">  // regenerate on a fresh install if non-default config is set</span></div><div style="left:2696px;top:204px;height:4px;line-height:4px;font-family:'Liberation Mono';font-size:3.333px;font-weight:bold;white-space:pre;"><span style="color:#cad3f5">  </span><span style="color:#c6a0f6">if</span><span style="color:#cad3f5"> </span><span style="color:#f5a97f">(</span><span style="color:#cad3f5">utils</span><span style="color:#8bd5ca">.</span><span style="color:#8aadf4">isFreshInstall</span><span style="color:#eed49f">()</span><span style="color:#cad3f5"> </span><span style="color:#8bd5ca">&amp;&amp;</span><span style="color:#cad3f5"> </span><span style="color:#8bd5ca">!</span><span style="color:#cad3f5">utils</span><span style="color:#8bd5ca">.</span><span style="color:#8aadf4">isDefaultConfig</span><span style="color:#eed49f">()</span><span style="color:#f5a97f">)</span><span style="color:#cad3f5"> </span><span style="color:#f5a97f">{</span></div><div style="left:2696px;top:208px;height:4px;line-height:4px;font-family:'Liberation Mono';font-size:3.333px;font-weight:bold;white-space:pre;"><span style="color:#cad3f5">    utils</span><span style="color:#8bd5ca">.</span><span style="color:#8aadf4">updateThemes</span><span style="color:#eed49f">(</span></div><div style="left:2696px;top:212px;height:4px;line-height:4px;font-family:'Liberation Mono';font-size:3.333px;font-weight:bold;white-space:pre;"><span style="color:#cad3f5">      </span><span style="color:#8087a2">options:</span><span style="color:#cad3f5">utils</span><span style="color:#8bd5ca">.</span><span style="color:#8aadf4">getConfiguration</span><span style="color:#a6da95">()</span><span style="color:#939ab7">,</span></div><div style="left:2696px;top:216px;height:4px;line-height:4px;font-family:'Liberation Mono';font-size:3.333px;font-weight:bold;white-space:pre;"><span style="color:#cad3f5">      paths</span><span style="color:#939ab7">,</span></div><div style="left:2696px;top:220px;height:4px;line-height:4px;font-family:'Liberation Mono';font-size:3.333px;font-weight:bold;white-space:pre;"><span style="color:#cad3f5">      </span><span style="color:#8087a2">trigger:</span><span style="color:#eed49f">UpdateTrigger</span><span style="color:#8bd5ca">.</span><span style="color:#8bd5ca">FRESH_INSTALL</span><span style="color:#939ab7">,</span></div><div style="left:2696px;top:224px;height:4px;line-height:4px;font-family:'Liberation Mono';font-size:3.333px;font-weight:bold;white-space:pre;"><span style="color:#cad3f5">    </span><span style="color:#eed49f">)</span><span style="color:#939ab7">;</span></div><div style="left:2696px;top:228px;height:4px;line-height:4px;font-family:'Liberation Mono';font-size:3.333px;font-weight:bold;white-space:pre;"><span style="color:#cad3f5">  </span><span style="color:#f5a97f">}</span></div><div style="left:2696px;top:232px;height:4px;line-height:4px;font-family:'Liberation Mono';font-size:3.333px;font-weight:bold;white-space:pre;"></div><div style="left:2696px;top:236px;height:4px;line-height:4px;font-family:'Liberation Mono';font-size:3.333px;font-weight:bold;white-space:pre;"><span style="color:#73788f">  // regenerate the theme files when the config changes</span></div><div style="left:2696px;top:240px;height:4px;line-height:4px;font-family:'Liberation Mono';font-size:3.333px;font-weight:bold;white-space:pre;"><span style="color:#cad3f5">  </span><span style="color:#eed49f">workspace</span><span style="color:#8bd5ca">.</span><span style="color:#8aadf4">onDidChangeConfiguration</span><span style="color:#f5a97f">(</span><span style="color:#8087a2">listener:</span><span style="color:#eed49f">(</span><span style="color:#ee99a0">event</span><span style="color:#8bd5ca">:</span><span style="color:#cad3f5"> </span><span style="color:#eed49f">ConfigurationChangeEvent</span><span style="color:#eed49f">)</span><span style="color:#cad3f5"> </span><span style="color:#8bd5ca">=&gt;</span><span style="color:#cad3f5"> </span><span style="color:#eed49f">{</span></div><div style="left:2696px;top:244px;height:4px;line-height:4px;font-family:'Liberation Mono';font-size:3.333px;font-weight:bold;white-space:pre;"><span style="color:#cad3f5">    </span><span style="color:#c6a0f6">if</span><span style="color:#cad3f5"> </span><span style="color:#a6da95">(</span></div><div style="left:2696px;top:248px;height:4px;line-height:4px;font-family:'Liberation Mono';font-size:3.333px;font-weight:bold;white-space:pre;"><span style="color:#cad3f5">      </span><span style="color:#ee99a0">event</span><span style="color:#8bd5ca">.</span><span style="color:#8aadf4">affectsConfiguration</span><span style="color:#7dc4e4">(</span><span style="color:#8087a2">section:</span><span style="color:#a6da95">&quot;workbench.colorTheme&quot;</span><span style="color:#7dc4e4">)</span><span style="color:#cad3f5"> </span><span style="color:#8bd5ca">&amp;&amp;</span></div><div style="left:2696px;top:252px;height:4px;line-height:4px;font-family:'Liberation Mono';font-size:3.333px;font-weight:bold;white-space:pre;"><span style="color:#cad3f5">      </span><span style="color:#eed49f">extensions</span><span style="color:#8bd5ca">.</span><span style="color:#8aadf4">getExtension</span><span style="color:#7dc4e4">(</span><span style="color:#8087a2">extensionId:</span><span style="color:#a6da95">&quot;catppuccin.catppuccin-vsc-icons&quot;</span><span style="color:#7dc4e4">)</span></div><div style="left:2696px;top:256px;height:4px;line-height:4px;font-family:'Liberation Mono';font-size:3.333px;font-weight:bold;white-space:pre;"><span style="color:#cad3f5">    </span><span style="color:#a6da95">)</span><span style="color:#cad3f5"> </span><span style="color:#a6da95">{</span></div><div style="left:2696px;top:260px;height:4px;line-height:4px;font-family:'Liberation Mono';font-size:3.333px;font-weight:bold;white-space:pre;"><span style="color:#cad3f5">      </span><span style="color:#c6a0f6">const</span><span style="color:#cad3f5"> theme </span><span style="color:#8bd5ca">=</span><span style="color:#cad3f5"> </span><span style="color:#eed49f">workspace</span></div><div style="left:2696px;top:264px;height:4px;line-height:4px;font-family:'Liberation Mono';font-size:3.333px;font-weight:bold;white-space:pre;"><span style="color:#cad3f5">        </span><span style="color:#8bd5ca">.</span><span style="color:#8aadf4">getConfiguration</span><span style="color:#7dc4e4">(</span><span style="color:#8087a2">section:</span><span style="color:#a6da95">&quot;workbench&quot;</span><span style="color:#7dc4e4">)</span></div><div style="left:2696px;top:268px;height:4px;line-height:4px;font-family:'Liberation Mono';font-size:3.333px;font-weight:bold;white-space:pre;"><span style="color:#cad3f5">        </span><span style="color:#8bd5ca">.</span><span style="color:#8aadf4">get</span><span style="color:#8bd5ca">&lt;</span><span style="color:#c6a0f6">string</span><span style="color:#8bd5ca">&gt;</span><span style="color:#7dc4e4">(</span><span style="color:#8087a2">section:</span><span style="color:#a6da95">&quot;colorTheme&quot;</span><span style="color:#7dc4e4">)</span><span style="color:#939ab7">;</span></div><div style="left:2696px;top:272px;height:4px;line-height:4px;font-family:'Liberation Mono';font-size:3.333px;font-weight:bold;white-space:pre;"><span style="color:#cad3f5">      </span><span style="color:#c6a0f6">const</span><span style="color:#cad3f5"> ctp_themes </span><span style="color:#8bd5ca">=</span><span style="color:#cad3f5"> </span><span style="color:#7dc4e4">{</span></div><div style="left:2696px;top:276px;height:4px;line-height:4px;font-family:'Liberation Mono';font-size:3.333px;font-weight:bold;white-space:pre;"><span style="color:#cad3f5">        </span><span style="color:#a6da95">&quot;Catppuccin Latte&quot;</span><span style="color:#8bd5ca">:</span><span style="color:#cad3f5"> </span><span style="color:#a6da95">&quot;catppuccin-latte&quot;</span><span style="color:#939ab7">,</span></div><div style="left:2696px;top:280px;height:4px;line-height:4px;font-family:'Liberation Mono';font-size:3.333px;font-weight:bold;white-space:pre;"><span style="color:#cad3f5">        </span><span style="color:#a6da95">&quot;Catppuccin Frappé&quot;</span><span style="color:#8bd5ca">:</span><span style="color:#cad3f5"> </span><span style="color:#a6da95">&quot;catppuccin-frappe&quot;</span><span style="color:#939ab7">,</span></div><div style="left:2696px;top:284px;height:4px;line-height:4px;font-family:'Liberation Mono';font-size:3.333px;font-weight:bold;white-space:pre;"><span style="color:#cad3f5">        </span><span style="color:#a6da95">&quot;Catppuccin Macchiato&quot;</span><span style="color:#8bd5ca">:</span><span style="color:#cad3f5"> </span><span style="color:#a6da95">&quot;catppuccin-macchiato&quot;</span><span style="color:#939ab7">,</span></div><div style="left:2696px;top:288px;height:4px;line-height:4px;font-family:'Liberation Mono';font-size:3.333px;font-weight:bold;white-space:pre;"><span style="color:#cad3f5">        </span><span style="color:#a6da95">&quot;Catppuccin Mocha&quot;</span><span style="color:#8bd5ca">:</span><span style="color:#cad3f5"> </span><span style="color:#a6da95">&quot;catppuccin-mocha&quot;</span><span style="color:#939ab7">,</span></div><div style="left:2696px;top:292px;height:4px;line-height:4px;font-family:'Liberation Mono';font-size:3.333px;font-weight:bold;white-space:pre;"><span style="color:#cad3f5">      </span><span style="color:#7dc4e4">}</span><span style="color:#939ab7">;</span></div><div style="left:2696px;top:296px;height:4px;line-height:4px;font-family:'Liberation Mono';font-size:3.333px;font-weight:bold;white-space:pre;"><span style="color:#cad3f5">      </span><span style="color:#c6a0f6">if</span><span style="color:#cad3f5"> </span><span style="color:#7dc4e4">(</span><span style="color:#eed49f">Object</span><span style="color:#8bd5ca">.</span><span style="color:#8aadf4">keys</span><span style="color:#c6a0f6">(</span><span style="color:#8087a2">o:</span><span style="color:#cad3f5">ctp_themes</span><span style="color:#c6a0f6">)</span><span style="color:#8bd5ca">.</span><span style="color:#8aadf4">includes</span><span style="color:#c6a0f6">(</span><span style="color:#8087a2">searchElement:</span><span style="color:#cad3f5">theme</span><span style="color:#c6a0f6">)</span><span style="color:#7dc4e4">)</span><span style="color:#cad3f5"> </span><span style="color:#7dc4e4">{</span></div><div style="left:2696px;top:300px;height:4px;line-height:4px;font-family:'Liberation Mono';font-size:3.333px;font-weight:bold;white-space:pre;"><span style="color:#cad3f5">        </span><span style="color:#eed49f">workspace</span></div><div style="left:2696px;top:304px;height:4px;line-height:4px;font-family:'Liberation Mono';font-size:3.333px;font-weight:bold;white-space:pre;"><span style="color:#cad3f5">          </span><span style="color:#8bd5ca">.</span><span style="color:#8aadf4">getConfiguration</span><span style="color:#c6a0f6">(</span><span style="color:#8087a2">section:</span><span style="color:#a6da95">&quot;workbench&quot;</span><span style="color:#c6a0f6">)</span></div><div style="left:2696px;top:308px;height:4px;line-height:4px;font-family:'Liberation Mono';font-size:3.333px;font-weight:bold;white-space:pre;"><span style="color:#cad3f5">          </span><span style="color:#8bd5ca">.</span><span style="color:#8aadf4">update</span><span style="color:#c6a0f6">(</span><span style="color:#8087a2">section:</span><span style="color:#a6da95">&quot;iconTheme&quot;</span><span style="color:#939ab7">,</span><span style="color:#cad3f5"> </span><span style="color:#8087a2">value:</span><span style="color:#cad3f5">ctp_themes</span><span style="color:#ed8796">[</span><span style="color:#cad3f5">theme</span><span style="color:#ed8796">]</span><span style="color:#939ab7">,</span><span style="color:#cad3f5"> </span><span style="color:#8087a2">configurationTarget:</span><span style="color:#f5a97f">true</span><span style="color:#c6a0f6">)</span><span style="color:#939ab7">;</span></div><div style="left:2696px;top:312px;height:4px;line-height:4px;font-family:'Liberation Mono';font-size:3.333px;font-weight:bold;white-space:pre;"><span style="color:#cad3f5">      </span><span style="color:#7dc4e4">}</span></div><div style="left:2696px;top:316px;height:4px;line-height:4px;font-family:'Liberation Mono';font-size:3.333px;font-weight:bold;white-space:pre;"><span style="color:#cad3f5">    </span><span style="color:#a6da95">}</span></div><div style="left:2696px;top:320px;height:4px;line-height:4px;font-family:'Liberation Mono';font-size:3.333px;font-weight:bold;white-space:pre;"><span style="color:#cad3f5">    </span><span style="color:#c6a0f6">if</span><span style="color:#cad3f5"> </span><span style="color:#a6da95">(</span><span style="color:#ee99a0">event</span><span style="color:#8bd5ca">.</span><span style="color:#8aadf4">affectsConfiguration</span><span style="color:#7dc4e4">(</span><span style="color:#cad3f5">section</span><span style="color:#8bd5ca">:</span><span style="color:#a6da95">&quot;catppuccin&quot;</span><span style="color:#7dc4e4">)</span><span style="color:#a6da95">)</span><span style="color:#cad3f5"> </span><span style="color:#a6da95">{</span></div><div style="left:2696px;top:324px;height:4px;line-height:4px;font-family:'Liberation Mono';font-size:3.333px;font-weight:bold;white-space:pre;"><span style="color:#cad3f5">      utils</span><span style="color:#8bd5ca">.</span><span style="color:#8aadf4">updateThemes</span><span style="color:#7dc4e4">(</span></div><div style="left:2696px;top:328px;height:4px;line-height:4px;font-family:'Liberation Mono';font-size:3.333px;font-weight:bold;white-space:pre;"><span style="color:#cad3f5">        </span><span style="color:#cad3f5">options</span><span style="color:#8bd5ca">:</span><span style="color:#cad3f5">utils</span><span style="color:#8bd5ca">.</span><span style="color:#8aadf4">getConfiguration</span><span style="color:#c6a0f6">()</span><span style="color:#939ab7">,</span></div><div style="left:2696px;top:332px;height:4px;line-height:4px;font-family:'Liberation Mono';font-size:3.333px;font-weight:bold;white-space:pre;"><span style="color:#cad3f5">        paths</span><span style="color:#939ab7">,</span></div><div style="left:2696px;top:336px;height:4px;line-height:4px;font-family:'Liberation Mono';font-size:3.333px;font-weight:bold;white-space:pre;"><span style="color:#cad3f5">        </span><span style="color:#cad3f5">trigger</span><span style="color:#8bd5ca">:</span><span style="color:#eed49f">UpdateTrigger</span><span style="color:#8bd5ca">.</span><span style="color:#8bd5ca">CONFIG_CHANGE</span><span style="color:#939ab7">,</span></div><div style="left:2696px;top:340px;height:4px;line-height:4px;font-family:'Liberation Mono';font-size:3.333px;font-weight:bold;white-space:pre;"><span style="color:#cad3f5">      </span><span style="color:#7dc4e4">)</span><span style="color:#939ab7">;</span></div><div style="left:2696px;top:344px;height:4px;line-height:4px;font-family:'Liberation Mono';font-size:3.333px;font-weight:bold;white-space:pre;"><span style="color:#cad3f5">    </span><span style="color:#a6da95">}</span></div><div style="left:2696px;top:348px;height:4px;line-height:4px;font-family:'Liberation Mono';font-size:3.333px;font-weight:bold;white-space:pre;"><span style="color:#cad3f5">  </span><span style="color:#eed49f">}</span><span style="color:#f5a97f">)</span><span style="color:#939ab7">;</span></div><div style="left:2696px;top:352px;height:4px;line-height:4px;font-family:'Liberation Mono';font-size:3.333px;font-weight:bold;white-space:pre;"><span style="color:#ed8796">}</span><span style="color:#939ab7">;</span></div><div style="left:2696px;top:356px;height:4px;line-height:4px;font-family:'Liberation Mono';font-size:3.333px;font-weight:bold;white-space:pre;"></div><div style="left:2696px;top:360px;height:4px;line-height:4px;font-family:'Liberation Mono';font-size:3.333px;font-weight:bold;white-space:pre;"><span style="color:#c6a0f6">export</span><span style="color:#cad3f5"> </span><span style="color:#c6a0f6">const</span><span style="color:#cad3f5"> </span><span style="color:#8aadf4">deactivate</span><span style="color:#cad3f5"> </span><span style="color:#8bd5ca">=</span><span style="color:#cad3f5"> </span><span style="color:#ed8796">()</span><span style="color:#cad3f5"> </span><span style="color:#8bd5ca">=&gt;</span><span style="color:#cad3f5"> </span><span style="color:#ed8796">{}</span><span style="color:#939ab7">;</span></div>
<div style="position:absolute;left:2924px;top:172px;width:24px;height:1750px;background:#1e2030;"></div>
<div style="position:absolute;left:2924px;top:172px;width:1px;height:1750px;background:#2a2d40;"></div>
<div style="position:absolute;left:2924px;top:172px;width:24px;height:766px;background:#3a3e53;"></div>
<div style="position:absolute;left:2924px;top:486px;width:24px;height:4px;background:#8a8fa8;"></div>
<svg style="position:absolute;left:2738px;top:13px;" width="32" height="32" viewBox="0 0 32 32" fill="none"><rect x="2.5" y="2.5" width="27" height="27" rx="3" stroke="#cad3f5" stroke-width="2.5"/><rect x="2.5" y="2.5" width="11" height="27" rx="2" fill="#cad3f5"/></svg>
<svg style="position:absolute;left:2790px;top:13px;" width="32" height="32" viewBox="0 0 32 32" fill="none"><rect x="2.5" y="2.5" width="27" height="27" rx="3" stroke="#cad3f5" stroke-width="2.5"/><path d="M2.5 19.5h27" stroke="#cad3f5" stroke-width="2.5"/></svg>
<svg style="position:absolute;left:2842px;top:13px;" width="32" height="32" viewBox="0 0 32 32" fill="none"><rect x="2.5" y="2.5" width="27" height="27" rx="3" stroke="#cad3f5" stroke-width="2.5"/><path d="M18 2.5v27" stroke="#cad3f5" stroke-width="2.5"/></svg>
<svg style="position:absolute;left:2896px;top:13px;" width="32" height="32" viewBox="0 0 32 32" fill="none"><rect x="2.5" y="4.5" width="11" height="23" rx="3" stroke="#cad3f5" stroke-width="2.5"/><rect x="18" y="4.5" width="10" height="9" rx="3" stroke="#cad3f5" stroke-width="2.5"/><rect x="18" y="18" width="10" height="9" rx="3" stroke="#cad3f5" stroke-width="2.5"/></svg>
<svg style="position:absolute;left:2628px;top:76px;" width="36" height="32" viewBox="0 0 36 32" fill="none"><circle cx="20" cy="16" r="9" stroke="#c6a0f6" stroke-width="2.4"/><path d="M11 16H3M8 10.5 2.5 16 8 21.5M29 16h3" stroke="#c6a0f6" stroke-width="2.4" stroke-linejoin="round"/></svg>
<svg style="position:absolute;left:2682px;top:76px;" width="34" height="32" viewBox="0 0 34 32" fill="none"><circle cx="17" cy="16" r="9" stroke="#6b5a8a" stroke-width="2.4"/><path d="M1.5 16h6.5M26 16h6.5" stroke="#6b5a8a" stroke-width="2.4"/></svg>
<svg style="position:absolute;left:2732px;top:76px;" width="36" height="32" viewBox="0 0 36 32" fill="none"><circle cx="12" cy="16" r="9" stroke="#6b5a8a" stroke-width="2.4"/><path d="M21 16h12.5M28 10.5l5.5 5.5-5.5 5.5M1 16h2" stroke="#6b5a8a" stroke-width="2.4" stroke-linejoin="round"/></svg>
<svg style="position:absolute;left:2787px;top:77px;" width="30" height="30" viewBox="0 0 30 30" fill="none"><circle cx="15" cy="15" r="13" stroke="#d6d0cc" stroke-width="2.3"/><path d="M12.5 7.5v14.5M12.5 8.5l6.5 6" stroke="#d6d0cc" stroke-width="2.2"/><circle cx="12.5" cy="8" r="2.6" fill="#d6d0cc"/><circle cx="19.5" cy="14.3" r="2.6" fill="#d6d0cc"/><circle cx="12.5" cy="22" r="2.6" fill="#d6d0cc"/></svg>
<svg style="position:absolute;left:2841px;top:78px;" width="28" height="28" viewBox="0 0 28 28" fill="none"><rect x="1.5" y="1.5" width="25" height="25" rx="2.5" stroke="#c6a0f6" stroke-width="2.4"/><path d="M14 1.5v25" stroke="#c6a0f6" stroke-width="2.4"/></svg>
<div style="left:2893.5px;top:90px;width:5px;height:5px;border-radius:50%;background:#c6a0f6"></div>
<div style="left:2903.5px;top:90px;width:5px;height:5px;border-radius:50%;background:#c6a0f6"></div>
<div style="left:2913.5px;top:90px;width:5px;height:5px;border-radius:50%;background:#c6a0f6"></div>
<svg style="position:absolute;left:587.6px;top:78.5px;overflow:visible;" width="28.7" height="28.7" viewBox="0 0 16 16" fill="none"><rect x=".75" y=".75" width="14.5" height="14.5" rx="2.6" stroke="#8aadf4" stroke-width="1"/><path transform="translate(0 0) scale(1.0)" d="M5.5 7.95h4.1M7.55 7.95v6.15M14.05 8.8c-.35-.55-.9-.85-1.55-.85-.9 0-1.55.55-1.55 1.35 0 1.75 3.2 1.15 3.2 3.05 0 .8-.7 1.45-1.7 1.45-.75 0-1.35-.35-1.7-.9" stroke="#8aadf4" stroke-width=".95" fill="none" stroke-linecap="round" stroke-linejoin="round"/></svg>
<svg style="position:absolute;left:766px;top:85px;" width="20" height="18" viewBox="0 0 20 18" fill="none"><path d="M2 1.5l15 15M17 1.5l-15 15" stroke="#c6a0f6" stroke-width="2.2"/></svg>
<svg style="position:absolute;left:829px;top:77px;" width="26" height="32" viewBox="0 0 26 32" fill="none"><path d="M2.5 6a4.5 4.5 0 0 1 4.5-4.5h7.5l9 9v15.5a4.5 4.5 0 0 1-4.5 4.5H7a4.5 4.5 0 0 1-4.5-4.5z" stroke="#b8c0e0" stroke-width="1.7"/><path d="M14.5 1.5v6a2.5 2.5 0 0 0 2.5 2.5h6.5" stroke="#b8c0e0" stroke-width="1.7"/></svg>
<svg style="position:absolute;left:1064px;top:78px;" width="36" height="30" viewBox="0 0 36 30" fill="none"><path d="M9.5 4.5H8.2c-1.4 0-2 .8-2 2.2v4.2c0 1.4-.8 2.2-2.5 2.6 1.7.4 2.5 1.2 2.5 2.6v4.2c0 1.4.6 2.2 2 2.2h1.3M24.5 4.5h1.3c1.4 0 2 .8 2 2.2v4.2c0 1.4.8 2.2 2.5 2.6-1.7.4-2.5 1.2-2.5 2.6v4.2c0 1.4-.6 2.2-2 2.2h-1.3" stroke="#eed49f" stroke-width="1.7" stroke-linecap="round"/><circle cx="13.5" cy="21.5" r="1.1" fill="#eed49f"/><circle cx="17" cy="21.5" r="1.1" fill="#eed49f"/><circle cx="20.5" cy="21.5" r="1.1" fill="#eed49f"/></svg>
<svg style="position:absolute;left:646px;top:139px;" width="14" height="22" viewBox="0 0 14 22" fill="none"><path d="M2 2l9 9-9 9" stroke="#a5adcb" stroke-width="2" stroke-linejoin="round"/></svg>
<svg style="position:absolute;left:668px;top:136px;overflow:visible;" width="29" height="29" viewBox="0 0 16 16" fill="none"><rect x=".75" y=".75" width="14.5" height="14.5" rx="2.6" stroke="#8aadf4" stroke-width="1"/><path transform="translate(0 0) scale(1.0)" d="M5.5 7.95h4.1M7.55 7.95v6.15M14.05 8.8c-.35-.55-.9-.85-1.55-.85-.9 0-1.55.55-1.55 1.35 0 1.75 3.2 1.15 3.2 3.05 0 .8-.7 1.45-1.7 1.45-.75 0-1.35-.35-1.7-.9" stroke="#8aadf4" stroke-width=".95" fill="none" stroke-linecap="round" stroke-linejoin="round"/></svg>
<svg style="position:absolute;left:809px;top:139px;" width="14" height="22" viewBox="0 0 14 22" fill="none"><path d="M2 2l9 9-9 9" stroke="#a5adcb" stroke-width="2" stroke-linejoin="round"/></svg>
<svg style="position:absolute;left:831px;top:137px;" width="32" height="26" viewBox="0 0 32 26" fill="none"><path d="M6 3H2v20h4M26 3h4v20h-4" stroke="#cad3f5" stroke-width="2.2"/><path d="M8.5 13.5l8-5 6 3v5l-8 5-6-3z" stroke="#cad3f5" stroke-width="2"/><path d="M8.5 13.5l6 3 8-5M14.5 16.5v5" stroke="#cad3f5" stroke-width="2"/></svg>
<svg style="position:absolute;left:26px;top:80px;" width="48" height="52" viewBox="0 0 48 52" fill="none"><path d="M16 10.5V5.5a3 3 0 0 1 3-3h12l9.5 9.5V33a3 3 0 0 1-3 3H19a3 3 0 0 1-3-3z" stroke="#c6a0f6" stroke-width="3"/><path d="M29.5 2.5V12h10" stroke="#c6a0f6" stroke-width="3"/><path d="M16 13.5H6a3 3 0 0 0-3 3V45a3 3 0 0 0 3 3h19a3 3 0 0 0 3-3v-9" stroke="#c6a0f6" stroke-width="3"/></svg>
<svg style="position:absolute;left:0px;top:160px;" width="98" height="60" viewBox="0 0 98 60" fill="none"><circle cx="57" cy="34" r="15.2" stroke="#7a7f9a" stroke-width="3"/><path d="M46.2 45 29.5 63" stroke="#7a7f9a" stroke-width="3.2" stroke-linecap="round"/></svg>
<svg style="position:absolute;left:0px;top:260px;" width="98" height="64" viewBox="0 0 98 64" fill="none"><circle cx="39.5" cy="21" r="5.6" stroke="#7a7f9a" stroke-width="2.8"/><circle cx="39.5" cy="54" r="5.6" stroke="#7a7f9a" stroke-width="2.8"/><circle cx="61.5" cy="29.5" r="5.6" stroke="#7a7f9a" stroke-width="2.8"/><path d="M39.5 26.6v21.8M39.5 45c0-5 3-7.5 8.5-7.5h4.5c5 0 8.2-1.5 9-2.6" stroke="#7a7f9a" stroke-width="2.8"/></svg>
<svg style="position:absolute;left:0px;top:360px;" width="98" height="64" viewBox="0 0 98 64" fill="none"><path d="M43 11v17M43 11 72.5 30 54 42" stroke="#7a7f9a" stroke-width="2.8" stroke-linejoin="round"/><ellipse cx="37.5" cy="47" rx="7" ry="8.5" stroke="#7a7f9a" stroke-width="2.8"/><path d="M30.5 47H23.5M44.5 47h7M31 40l-5-4M44 40l5-4M31 54l-5 4.5M44 54l5 4.5M30.5 43h14" stroke="#7a7f9a" stroke-width="2.6"/></svg>
<svg style="position:absolute;left:0px;top:460px;" width="98" height="60" viewBox="0 0 98 60" fill="none"><path d="M28.5 35h18v17.5h-15a3 3 0 0 1-3-3zM46.5 35h17v14.5a3 3 0 0 1-3 3h-14M28.5 35V21a3 3 0 0 1 3-3h12a3 3 0 0 1 3 3v14M46.5 35V18" stroke="#7a7f9a" stroke-width="2.8"/><rect x="54" y="6.5" width="19" height="18.5" rx="3" stroke="#7a7f9a" stroke-width="2.8"/></svg>
<svg style="position:absolute;left:30px;top:562px;" width="40" height="46" viewBox="0 0 40 46" fill="none"><path d="M8 2.5h24M13 2.5v14L2.5 40a2.5 2.5 0 0 0 2.3 3.5h30.4a2.5 2.5 0 0 0 2.3-3.5L27 16.5v-14M7 29h26" stroke="#7a7f9a" stroke-width="3" stroke-linejoin="round"/></svg>
<svg style="position:absolute;left:25px;top:658px;" width="48" height="48" viewBox="0 0 48 48" fill="none"><circle cx="24" cy="24" r="22" stroke="#7a7f9a" stroke-width="3"/><path d="M19 12v24M19 14l12 10" stroke="#7a7f9a" stroke-width="3"/><circle cx="19" cy="12.5" r="4" fill="#7a7f9a"/><circle cx="31" cy="24" r="4" fill="#7a7f9a"/><circle cx="19" cy="35.5" r="4" fill="#7a7f9a"/></svg>
<svg style="position:absolute;left:25px;top:1753px;" width="50" height="50" viewBox="0 0 50 50" fill="none"><circle cx="25" cy="25" r="22.5" stroke="#7a7f9a" stroke-width="3"/><circle cx="25" cy="18.5" r="9.2" stroke="#7a7f9a" stroke-width="3"/><path d="M10.5 42c1.5-7 7-11 14.5-11s13 4 14.5 11" stroke="#7a7f9a" stroke-width="3"/></svg>
<svg style="position:absolute;left:25px;top:1849px;" width="50" height="50" viewBox="0 0 50 50" fill="none"><path d="M20.38 9.89 L21.04 1.33 L28.96 1.33 L29.62 9.89 L32.42 11.05 L38.94 5.46 L44.54 11.06 L38.95 17.58 L40.11 20.38 L48.67 21.04 L48.67 28.96 L40.11 29.62 L38.95 32.42 L44.54 38.94 L38.94 44.54 L32.42 38.95 L29.62 40.11 L28.96 48.67 L21.04 48.67 L20.38 40.11 L17.58 38.95 L11.06 44.54 L5.46 38.94 L11.05 32.42 L9.89 29.62 L1.33 28.96 L1.33 21.04 L9.89 20.38 L11.05 17.58 L5.46 11.06 L11.06 5.46 L17.58 11.05 Z" stroke="#7a7f9a" stroke-width="3" stroke-linejoin="miter"/><circle cx="25" cy="25" r="5.5" stroke="#7a7f9a" stroke-width="3"/></svg>
<div style="position:absolute;left:2px;top:1922px;width:68px;height:40px;background:#8aadf4;"></div>
<svg style="position:absolute;left:0px;top:1915px;" width="60" height="49" viewBox="0 0 60 49" fill="none"><path d="M27.9 24.3l7.6 7.5-7.6 7.7M43.9 17.4l-7.4 7.5 7.4 7.4" stroke="#181926" stroke-width="1.8" stroke-linecap="square"/></svg>
<svg style="position:absolute;left:70px;top:1915px;" width="45" height="49" viewBox="0 0 45 49" fill="none"><circle cx="19.8" cy="19.3" r="3.4" stroke="#cad3f5" stroke-width="1.9"/><circle cx="19.8" cy="39" r="3.4" stroke="#cad3f5" stroke-width="1.9"/><circle cx="32.2" cy="24.9" r="3.4" stroke="#cad3f5" stroke-width="1.9"/><path d="M19.8 22.7v12.9M19.8 32.5c0-1.5 1-1.8 2.5-1.8h4.5c3 0 5.4-1.5 5.4-2.5" stroke="#cad3f5" stroke-width="1.9"/></svg>
<div style="position:absolute;left:117px;top:1924px;height:40px;line-height:40px;font-family:'Liberation Sans';font-size:26.3px;font-weight:normal;color:#cad3f5;white-space:pre;">docs/update-for-3</div>
<svg style="position:absolute;left:337px;top:1933.5px;" width="30" height="24" viewBox="0 0 30 24" fill="none"><path d="M8 19H7a5.5 5.5 0 0 1-.5-11 8 8 0 0 1 15.5 1.5 4.8 4.8 0 0 1 .5 9.5h-1.5" stroke="#cad3f5" stroke-width="2"/><path d="M15 22V11M10.5 15l4.5-4.5 4.5 4.5" stroke="#cad3f5" stroke-width="2"/></svg>
<svg style="position:absolute;left:390px;top:1922px;" width="40" height="40" viewBox="0 0 40 40" fill="none"><circle cx="10" cy="14" r="3.3" stroke="#cad3f5" stroke-width="1.9"/><circle cx="10" cy="30.5" r="3.3" stroke="#cad3f5" stroke-width="1.9"/><circle cx="24" cy="21" r="3.3" stroke="#cad3f5" stroke-width="1.9"/><path d="M10 17.3v9.9M17 10v25M24 24.3v2.2c0 2.5-1.5 5-4 6.5L17 34" stroke="#cad3f5" stroke-width="1.9"/></svg>
<svg style="position:absolute;left:454px;top:1929px;" width="28" height="28" viewBox="0 0 28 28" fill="none"><circle cx="14" cy="14" r="12" stroke="#cad3f5" stroke-width="2"/><path d="M9 9l10 10M19 9 9 19" stroke="#cad3f5" stroke-width="2"/></svg>
<div style="position:absolute;left:489px;top:1924px;height:40px;line-height:40px;font-family:'Liberation Sans';font-size:25.2px;font-weight:normal;color:#cad3f5;white-space:pre;">0</div>
<svg style="position:absolute;left:511px;top:1928px;" width="27" height="28" viewBox="0 0 27 28" fill="none"><path d="M13.5 2.5 1.5 25h24z" stroke="#cad3f5" stroke-width="2" stroke-linejoin="round"/><path d="M13.5 10v8" stroke="#cad3f5" stroke-width="2.2"/><circle cx="13.5" cy="21.5" r="1.3" fill="#cad3f5"/></svg>
<div style="position:absolute;left:545px;top:1924px;height:40px;line-height:40px;font-family:'Liberation Sans';font-size:25.2px;font-weight:normal;color:#cad3f5;white-space:pre;">0</div>
<svg style="position:absolute;left:594px;top:1930px;" width="26" height="26" viewBox="0 0 26 26" fill="none"><path d="M3 2v6M0 5h6M6 15v7M2.5 18.5h7M10 9l3-5 3 3h4l3-3v6c1 1 1.5 2.5 1 4-1.5 3-5 4-8 3" stroke="#cad3f5" stroke-width="1.6"/></svg>
<svg style="position:absolute;left:652px;top:1928px;" width="30" height="30" viewBox="0 0 30 30" fill="none"><path d="M12 23H4a2 2 0 0 1-2-2V4a2 2 0 0 1 2-2h6l2.5 2.5H25a2 2 0 0 1 2 2V12" stroke="#cad3f5" stroke-width="2"/><path d="M2 8h9l2-2" stroke="#cad3f5" stroke-width="2"/><circle cx="21" cy="21" r="8" fill="#cad3f5"/><path d="M17 21l3 3 5-5.5" stroke="#181926" stroke-width="2"/></svg>
<div style="position:absolute;left:688px;top:1924px;height:40px;line-height:40px;font-family:'Liberation Sans';font-size:26.6px;font-weight:normal;color:#cad3f5;white-space:pre;">+69/~2/-0</div>
<svg style="position:absolute;left:835px;top:1929px;" width="28" height="28" viewBox="0 0 28 28" fill="none"><circle cx="14" cy="14" r="12.5" stroke="#cad3f5" stroke-width="2"/><circle cx="9.5" cy="11" r="1.6" fill="#cad3f5"/><circle cx="18.5" cy="11" r="1.6" fill="#cad3f5"/><path d="M8 17c1.5 2.5 3.5 3.5 6 3.5s4.5-1 6-3.5" stroke="#cad3f5" stroke-width="2"/></svg>
<svg style="position:absolute;left:1542px;top:1926px;" width="20" height="32" viewBox="0 0 20 32" fill="none"><circle cx="10" cy="16" r="6" stroke="#cad3f5" stroke-width="2"/><path d="M10 1v9M10 22v9" stroke="#cad3f5" stroke-width="2"/></svg>
<div style="position:absolute;left:1573px;top:1924px;height:40px;line-height:40px;font-family:'Liberation Sans';font-size:25.1px;font-weight:normal;color:#cad3f5;white-space:pre;">You, 10 months ago via PR #63</div>
<div style="position:absolute;left:1960px;top:1924px;height:40px;line-height:40px;font-family:'Liberation Sans';font-size:24.9px;font-weight:normal;color:#cad3f5;white-space:pre;">Ln 16, Col 1</div>
<div style="position:absolute;left:2129px;top:1924px;height:40px;line-height:40px;font-family:'Liberation Sans';font-size:24.9px;font-weight:normal;color:#cad3f5;white-space:pre;">Spaces: 2</div>
<div style="position:absolute;left:2273px;top:1924px;height:40px;line-height:40px;font-family:'Liberation Sans';font-size:25.4px;font-weight:normal;color:#cad3f5;white-space:pre;">UTF-8</div>
<div style="position:absolute;left:2377px;top:1924px;height:40px;line-height:40px;font-family:'Liberation Sans';font-size:25.4px;font-weight:normal;color:#cad3f5;white-space:pre;">LF</div>
<div style="position:absolute;left:2434px;top:1925px;height:40px;line-height:40px;font-family:'Liberation Sans';font-size:22px;font-weight:normal;color:#cad3f5;white-space:pre;">{ }</div>
<div style="position:absolute;left:2474px;top:1924px;height:40px;line-height:40px;font-family:'Liberation Sans';font-size:25.5px;font-weight:normal;color:#cad3f5;white-space:pre;">TypeScript</div>
<svg style="position:absolute;left:2622px;top:1928px;" width="32" height="28" viewBox="0 0 32 28" fill="none"><path d="M5 10c0-4 2-7 5.5-7 2.5 0 4.5 1.5 5.5 3 1-1.5 3-3 5.5-3C25 3 27 6 27 10v2c2 1 3 3 3 6v3c-3 3-8 5-14 5S5 24 2 21v-3c0-3 1-5 3-6z" stroke="#cad3f5" stroke-width="2"/><path d="M12 16v4M20 16v4" stroke="#cad3f5" stroke-width="2.4"/></svg>
<svg style="position:absolute;left:2684px;top:1929px;" width="24" height="26" viewBox="0 0 24 26" fill="none"><path d="M2 14l6 7L22 4" stroke="#cad3f5" stroke-width="2"/></svg>
<div style="position:absolute;left:2719px;top:1924px;height:40px;line-height:40px;font-family:'Liberation Sans';font-size:25.4px;font-weight:normal;color:#cad3f5;white-space:pre;">Prettier</div>
<svg style="position:absolute;left:2831px;top:1928px;" width="32" height="30" viewBox="0 0 32 30" fill="none"><circle cx="11" cy="9" r="5.5" stroke="#cad3f5" stroke-width="2"/><path d="M2 27c0-6 4-10 9-10M16 5h13v11h-5l-4 3v-3" stroke="#cad3f5" stroke-width="2"/></svg>
<svg style="position:absolute;left:2893px;top:1927px;" width="28" height="32" viewBox="0 0 28 32" fill="none"><path d="M14 3c-5 0-8.5 3.5-8.5 9v6L3 24.5h22L22.5 18v-6c0-5.5-3.5-9-8.5-9z" stroke="#cad3f5" stroke-width="2" stroke-linejoin="round"/><path d="M11 25.5a3 3 0 0 0 6 0" stroke="#cad3f5" stroke-width="2"/></svg>
<div id="frame"></div>
</div></body></html>
